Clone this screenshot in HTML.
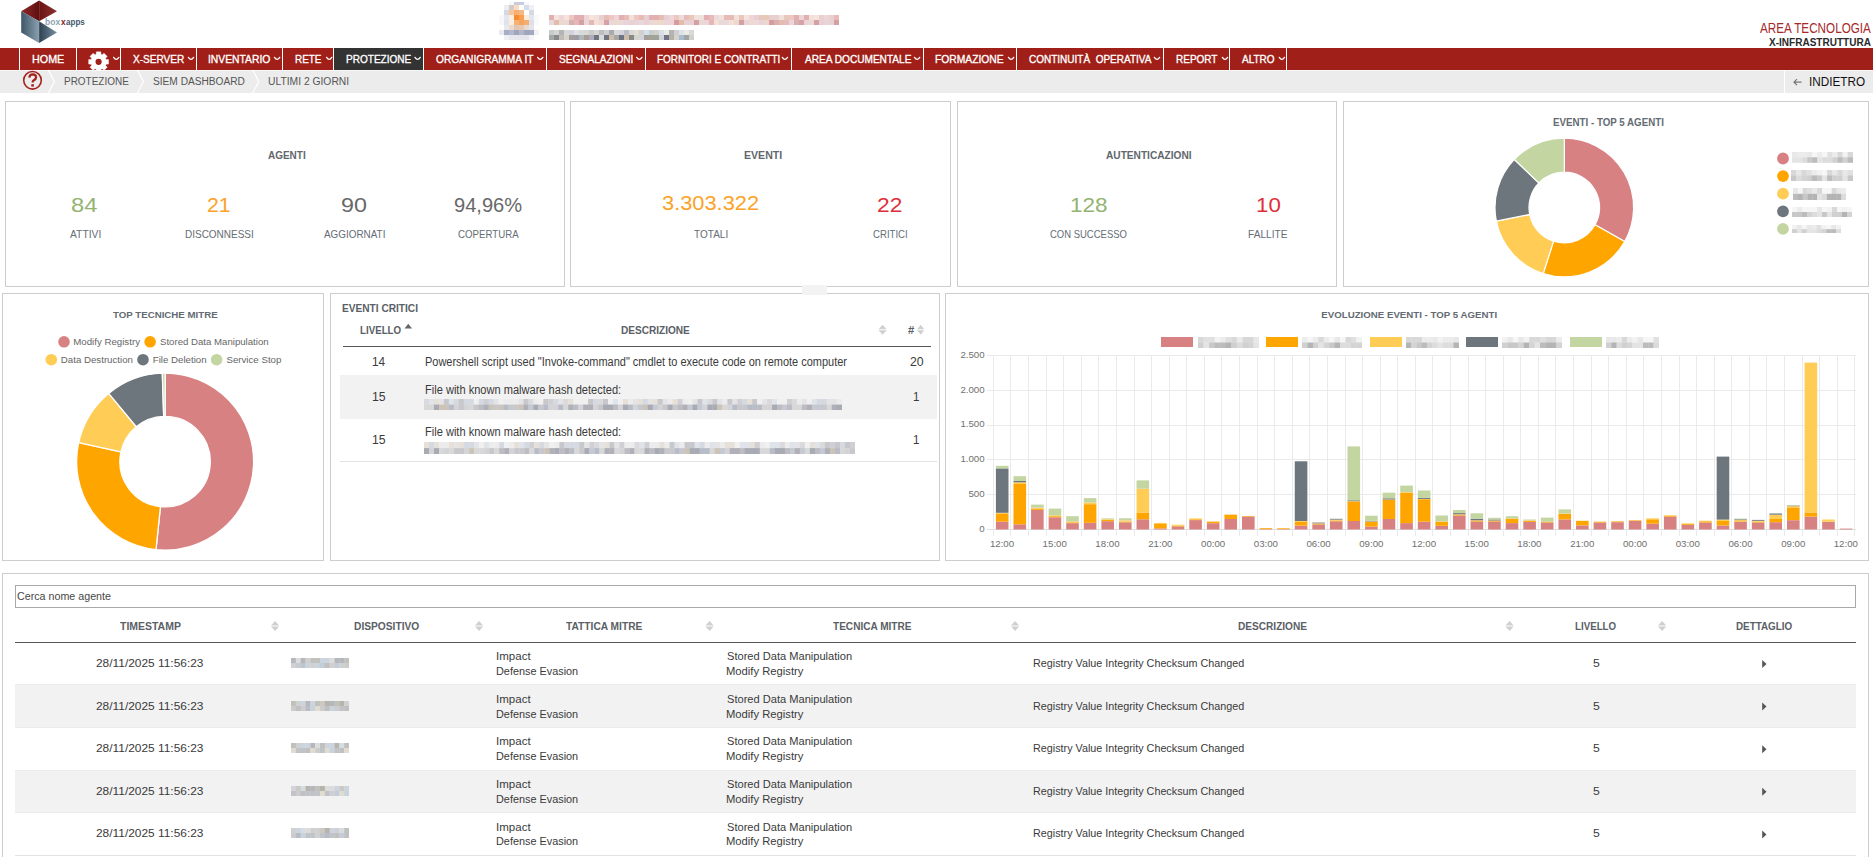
<!DOCTYPE html>
<html><head><meta charset="utf-8"><style>
html,body{margin:0;padding:0;background:#fff;width:1873px;height:857px;overflow:hidden;position:relative}
body{font-family:"Liberation Sans",sans-serif}
.t{position:absolute;white-space:nowrap;line-height:1;transform-origin:0 0}
.r{position:absolute;display:block}
svg.r{overflow:visible}
</style></head><body>
<svg class="r" style="left:0;top:0" width="100" height="48">
<defs>
<linearGradient id="lg1" x1="0" y1="0" x2="1" y2="0"><stop offset="0" stop-color="#8f2a2a"/><stop offset="1" stop-color="#5e0e10"/></linearGradient>
<linearGradient id="lg2" x1="0" y1="0" x2="1" y2="0"><stop offset="0" stop-color="#6a1212"/><stop offset="1" stop-color="#8e3232"/></linearGradient>
<linearGradient id="lg3" x1="0" y1="0" x2="1" y2="0"><stop offset="0" stop-color="#3e5668"/><stop offset="1" stop-color="#8aa0af"/></linearGradient>
<linearGradient id="lg4" x1="0" y1="0" x2="1" y2="0"><stop offset="0" stop-color="#2c4152"/><stop offset="1" stop-color="#7890a2"/></linearGradient>
</defs>
<polygon points="39.1,0.5 21.2,11.2 39.1,21.3" fill="url(#lg1)"/>
<polygon points="39.1,0.5 57,11.2 39.1,21.3" fill="url(#lg2)"/>
<polygon points="21.2,11.2 39.1,21.3 39.1,43 21.2,32.5" fill="url(#lg3)"/>
<polygon points="39.1,21.3 57,32.5 39.1,43" fill="url(#lg4)"/>
</svg>
<div class="t" style="left:45.45px;top:18.00px;font-size:9.00px;color:#8ea3b2;font-weight:bold;transform:scaleX(0.9449);">box</div>
<div class="t" style="left:60.92px;top:18.00px;font-size:9.00px;color:#8b1a1a;font-weight:bold;transform:scaleX(0.9259);">x</div>
<div class="t" style="left:65.76px;top:18.00px;font-size:9.00px;color:#3f586c;font-weight:bold;transform:scaleX(0.8928);">apps</div>
<svg class="r" style="left:0;top:0" width="600" height="48" shape-rendering="crispEdges"><rect x="513.9" y="2.1" width="5.05" height="2.95" fill="#c8ccdc"/><rect x="518.9" y="2.1" width="5.05" height="2.95" fill="#c8ccdc"/><rect x="508.9" y="2.1" width="5.05" height="2.95" fill="#f6f8fa"/><rect x="523.9" y="2.1" width="5.05" height="2.95" fill="#f6f8fa"/><rect x="503.9" y="5.0" width="5.05" height="5.05" fill="#eceef3"/><rect x="508.9" y="5.0" width="5.05" height="5.05" fill="#d6cac6"/><rect x="513.9" y="5.0" width="5.05" height="5.05" fill="#f8dcc4"/><rect x="518.9" y="5.0" width="5.05" height="5.05" fill="#fafcfd"/><rect x="523.9" y="5.0" width="5.05" height="5.05" fill="#d8dce6"/><rect x="528.9" y="5.0" width="5.05" height="5.05" fill="#eef0f4"/><rect x="503.9" y="10.0" width="5.05" height="5.05" fill="#d5d9e5"/><rect x="508.9" y="10.0" width="5.05" height="5.05" fill="#f8c49a"/><rect x="513.9" y="10.0" width="5.05" height="5.05" fill="#f7ae72"/><rect x="518.9" y="10.0" width="5.05" height="5.05" fill="#f5b880"/><rect x="523.9" y="10.0" width="5.05" height="5.05" fill="#ffffff"/><rect x="528.9" y="10.0" width="5.05" height="5.05" fill="#d5dbe6"/><rect x="498.9" y="15.0" width="5.05" height="5.05" fill="#f6f7f9"/><rect x="503.9" y="15.0" width="5.05" height="5.05" fill="#e3e6ee"/><rect x="508.9" y="15.0" width="5.05" height="5.05" fill="#fdeedf"/><rect x="513.9" y="15.0" width="5.05" height="5.05" fill="#fa8a2e"/><rect x="518.9" y="15.0" width="5.05" height="5.05" fill="#f89e50"/><rect x="523.9" y="15.0" width="5.05" height="5.05" fill="#fcecd8"/><rect x="528.9" y="15.0" width="5.05" height="5.05" fill="#e2e7ef"/><rect x="533.9" y="15.0" width="5.05" height="5.05" fill="#f8f9fb"/><rect x="498.9" y="20.0" width="5.05" height="5.05" fill="#f8f8fa"/><rect x="503.9" y="20.0" width="5.05" height="5.05" fill="#dfe3ec"/><rect x="508.9" y="20.0" width="5.05" height="5.05" fill="#fbeede"/><rect x="513.9" y="20.0" width="5.05" height="5.05" fill="#f6b07a"/><rect x="518.9" y="20.0" width="5.05" height="5.05" fill="#f5a562"/><rect x="523.9" y="20.0" width="5.05" height="5.05" fill="#f5ad70"/><rect x="528.9" y="20.0" width="5.05" height="5.05" fill="#dfdfe6"/><rect x="533.9" y="20.0" width="5.05" height="5.05" fill="#fafafa"/><rect x="503.9" y="25.0" width="5.05" height="5.05" fill="#e6e8ee"/><rect x="508.9" y="25.0" width="5.05" height="5.05" fill="#eedacb"/><rect x="513.9" y="25.0" width="5.05" height="5.05" fill="#e2c6b4"/><rect x="518.9" y="25.0" width="5.05" height="5.05" fill="#e8c8ae"/><rect x="523.9" y="25.0" width="5.05" height="5.05" fill="#e8dcd2"/><rect x="528.9" y="25.0" width="5.05" height="5.05" fill="#e3e5ec"/><rect x="498.9" y="30.0" width="5.05" height="5.05" fill="#e8e9ef"/><rect x="503.9" y="30.0" width="5.05" height="5.05" fill="#a8acc4"/><rect x="508.9" y="30.0" width="5.05" height="5.05" fill="#b4b8cc"/><rect x="513.9" y="30.0" width="5.05" height="5.05" fill="#a0a6bc"/><rect x="518.9" y="30.0" width="5.05" height="5.05" fill="#b2b8cc"/><rect x="523.9" y="30.0" width="5.05" height="5.05" fill="#a0a4bc"/><rect x="528.9" y="30.0" width="5.05" height="5.05" fill="#a4a8c0"/><rect x="533.9" y="30.0" width="5.05" height="5.05" fill="#f2f2f6"/><rect x="503.9" y="35.0" width="5.05" height="5.05" fill="#eef0f4"/><rect x="508.9" y="35.0" width="5.05" height="5.05" fill="#e6e8ee"/><rect x="513.9" y="35.0" width="5.05" height="5.05" fill="#e6e8ee"/><rect x="518.9" y="35.0" width="5.05" height="5.05" fill="#e4e6ec"/><rect x="523.9" y="35.0" width="5.05" height="5.05" fill="#e4e6ec"/><rect x="528.9" y="35.0" width="5.05" height="5.05" fill="#f4f4f8"/></svg>
<svg class="r" style="left:549px;top:15px;overflow:hidden" width="290" height="10" viewBox="0 0 290 10" preserveAspectRatio="none"><rect x="0.00" y="0.00" width="5.30" height="5.30" fill="#e2b0b0"/><rect x="5.00" y="0.00" width="5.30" height="5.30" fill="#f6e4dc"/><rect x="10.00" y="0.00" width="5.30" height="5.30" fill="#efd4d8"/><rect x="15.00" y="0.00" width="5.30" height="5.30" fill="#f6e4dc"/><rect x="20.00" y="0.00" width="5.30" height="5.30" fill="#eec8c0"/><rect x="25.00" y="0.00" width="5.30" height="5.30" fill="#e2b0b0"/><rect x="30.00" y="0.00" width="5.30" height="5.30" fill="#e2b0b0"/><rect x="35.00" y="0.00" width="5.30" height="5.30" fill="#efd4d8"/><rect x="40.00" y="0.00" width="5.30" height="5.30" fill="#f6e4dc"/><rect x="45.00" y="0.00" width="5.30" height="5.30" fill="#f2e0da"/><rect x="50.00" y="0.00" width="5.30" height="5.30" fill="#e8d0d0"/><rect x="55.00" y="0.00" width="5.30" height="5.30" fill="#e6bcb4"/><rect x="60.00" y="0.00" width="5.30" height="5.30" fill="#eec8c0"/><rect x="65.00" y="0.00" width="5.30" height="5.30" fill="#efd4d8"/><rect x="70.00" y="0.00" width="5.30" height="5.30" fill="#e2b0b0"/><rect x="75.00" y="0.00" width="5.30" height="5.30" fill="#e8bab8"/><rect x="80.00" y="0.00" width="5.30" height="5.30" fill="#f2e0da"/><rect x="85.00" y="0.00" width="5.30" height="5.30" fill="#eec8c0"/><rect x="90.00" y="0.00" width="5.30" height="5.30" fill="#e6bcb4"/><rect x="95.00" y="0.00" width="5.30" height="5.30" fill="#e5d0d6"/><rect x="100.00" y="0.00" width="5.30" height="5.30" fill="#e2b0b0"/><rect x="105.00" y="0.00" width="5.30" height="5.30" fill="#e3b0b0"/><rect x="110.00" y="0.00" width="5.30" height="5.30" fill="#e6bcb4"/><rect x="115.00" y="0.00" width="5.30" height="5.30" fill="#e5d0d6"/><rect x="120.00" y="0.00" width="5.30" height="5.30" fill="#efd4d8"/><rect x="125.00" y="0.00" width="5.30" height="5.30" fill="#eec8c0"/><rect x="130.00" y="0.00" width="5.30" height="5.30" fill="#ecdcdc"/><rect x="135.00" y="0.00" width="5.30" height="5.30" fill="#e8bab8"/><rect x="140.00" y="0.00" width="5.30" height="5.30" fill="#e8c8b8"/><rect x="145.00" y="0.00" width="5.30" height="5.30" fill="#f2e0da"/><rect x="150.00" y="0.00" width="5.30" height="5.30" fill="#f0e0dc"/><rect x="155.00" y="0.00" width="5.30" height="5.30" fill="#e2b0b0"/><rect x="160.00" y="0.00" width="5.30" height="5.30" fill="#e8bab8"/><rect x="165.00" y="0.00" width="5.30" height="5.30" fill="#ecdcdc"/><rect x="170.00" y="0.00" width="5.30" height="5.30" fill="#f2e0da"/><rect x="175.00" y="0.00" width="5.30" height="5.30" fill="#e8bab8"/><rect x="180.00" y="0.00" width="5.30" height="5.30" fill="#e6bcb4"/><rect x="185.00" y="0.00" width="5.30" height="5.30" fill="#f2e0da"/><rect x="190.00" y="0.00" width="5.30" height="5.30" fill="#e8c8b8"/><rect x="195.00" y="0.00" width="5.30" height="5.30" fill="#f6e4dc"/><rect x="200.00" y="0.00" width="5.30" height="5.30" fill="#efd4d8"/><rect x="205.00" y="0.00" width="5.30" height="5.30" fill="#e5d0d6"/><rect x="210.00" y="0.00" width="5.30" height="5.30" fill="#e8c8b8"/><rect x="215.00" y="0.00" width="5.30" height="5.30" fill="#e8c8b8"/><rect x="220.00" y="0.00" width="5.30" height="5.30" fill="#e8d0d0"/><rect x="225.00" y="0.00" width="5.30" height="5.30" fill="#e8d0d0"/><rect x="230.00" y="0.00" width="5.30" height="5.30" fill="#f2e0da"/><rect x="235.00" y="0.00" width="5.30" height="5.30" fill="#e8c8b8"/><rect x="240.00" y="0.00" width="5.30" height="5.30" fill="#eec8c0"/><rect x="245.00" y="0.00" width="5.30" height="5.30" fill="#e2b0b0"/><rect x="250.00" y="0.00" width="5.30" height="5.30" fill="#ecd4d8"/><rect x="255.00" y="0.00" width="5.30" height="5.30" fill="#e2b0b0"/><rect x="260.00" y="0.00" width="5.30" height="5.30" fill="#f2e0da"/><rect x="265.00" y="0.00" width="5.30" height="5.30" fill="#f6e4dc"/><rect x="270.00" y="0.00" width="5.30" height="5.30" fill="#e8d0d0"/><rect x="275.00" y="0.00" width="5.30" height="5.30" fill="#efd4d8"/><rect x="280.00" y="0.00" width="5.30" height="5.30" fill="#e8d0d0"/><rect x="285.00" y="0.00" width="5.30" height="5.30" fill="#e8bab8"/><rect x="0.00" y="5.00" width="5.30" height="5.30" fill="#e8d8dc"/><rect x="5.00" y="5.00" width="5.30" height="5.30" fill="#e4bcac"/><rect x="10.00" y="5.00" width="5.30" height="5.30" fill="#ecd8cc"/><rect x="15.00" y="5.00" width="5.30" height="5.30" fill="#ead8d8"/><rect x="20.00" y="5.00" width="5.30" height="5.30" fill="#d8b0b0"/><rect x="25.00" y="5.00" width="5.30" height="5.30" fill="#e4b8b8"/><rect x="30.00" y="5.00" width="5.30" height="5.30" fill="#d4a0a4"/><rect x="35.00" y="5.00" width="5.30" height="5.30" fill="#ead8d8"/><rect x="40.00" y="5.00" width="5.30" height="5.30" fill="#e4b8b8"/><rect x="45.00" y="5.00" width="5.30" height="5.30" fill="#f4e0d4"/><rect x="50.00" y="5.00" width="5.30" height="5.30" fill="#f0d8d8"/><rect x="55.00" y="5.00" width="5.30" height="5.30" fill="#d8a0a8"/><rect x="60.00" y="5.00" width="5.30" height="5.30" fill="#e8d8dc"/><rect x="65.00" y="5.00" width="5.30" height="5.30" fill="#ecd8cc"/><rect x="70.00" y="5.00" width="5.30" height="5.30" fill="#ead8d8"/><rect x="75.00" y="5.00" width="5.30" height="5.30" fill="#e8d4d8"/><rect x="80.00" y="5.00" width="5.30" height="5.30" fill="#e8d0d4"/><rect x="85.00" y="5.00" width="5.30" height="5.30" fill="#e8d4d8"/><rect x="90.00" y="5.00" width="5.30" height="5.30" fill="#e8d8dc"/><rect x="95.00" y="5.00" width="5.30" height="5.30" fill="#e8d0d4"/><rect x="100.00" y="5.00" width="5.30" height="5.30" fill="#ead8d8"/><rect x="105.00" y="5.00" width="5.30" height="5.30" fill="#ecd8cc"/><rect x="110.00" y="5.00" width="5.30" height="5.30" fill="#ecd8cc"/><rect x="115.00" y="5.00" width="5.30" height="5.30" fill="#ecd4d8"/><rect x="120.00" y="5.00" width="5.30" height="5.30" fill="#ecd4d8"/><rect x="125.00" y="5.00" width="5.30" height="5.30" fill="#d89ca0"/><rect x="130.00" y="5.00" width="5.30" height="5.30" fill="#e4bcac"/><rect x="135.00" y="5.00" width="5.30" height="5.30" fill="#e8d0d4"/><rect x="140.00" y="5.00" width="5.30" height="5.30" fill="#e8d0d4"/><rect x="145.00" y="5.00" width="5.30" height="5.30" fill="#d4a0a4"/><rect x="150.00" y="5.00" width="5.30" height="5.30" fill="#ead8d8"/><rect x="155.00" y="5.00" width="5.30" height="5.30" fill="#ecd4d8"/><rect x="160.00" y="5.00" width="5.30" height="5.30" fill="#e4b8b8"/><rect x="165.00" y="5.00" width="5.30" height="5.30" fill="#f4e0d4"/><rect x="170.00" y="5.00" width="5.30" height="5.30" fill="#ead8d8"/><rect x="175.00" y="5.00" width="5.30" height="5.30" fill="#e8d8dc"/><rect x="180.00" y="5.00" width="5.30" height="5.30" fill="#f4e0d4"/><rect x="185.00" y="5.00" width="5.30" height="5.30" fill="#ecd8cc"/><rect x="190.00" y="5.00" width="5.30" height="5.30" fill="#d4a0a4"/><rect x="195.00" y="5.00" width="5.30" height="5.30" fill="#e8d4d8"/><rect x="200.00" y="5.00" width="5.30" height="5.30" fill="#ecd8d4"/><rect x="205.00" y="5.00" width="5.30" height="5.30" fill="#f0d8d8"/><rect x="210.00" y="5.00" width="5.30" height="5.30" fill="#e8d4d8"/><rect x="215.00" y="5.00" width="5.30" height="5.30" fill="#ecd8cc"/><rect x="220.00" y="5.00" width="5.30" height="5.30" fill="#d89ca0"/><rect x="225.00" y="5.00" width="5.30" height="5.30" fill="#d8b0b0"/><rect x="230.00" y="5.00" width="5.30" height="5.30" fill="#e4bcac"/><rect x="235.00" y="5.00" width="5.30" height="5.30" fill="#e4bcbc"/><rect x="240.00" y="5.00" width="5.30" height="5.30" fill="#ecd4d8"/><rect x="245.00" y="5.00" width="5.30" height="5.30" fill="#d8b0b0"/><rect x="250.00" y="5.00" width="5.30" height="5.30" fill="#d8a0a8"/><rect x="255.00" y="5.00" width="5.30" height="5.30" fill="#ecd4d8"/><rect x="260.00" y="5.00" width="5.30" height="5.30" fill="#ecd8d4"/><rect x="265.00" y="5.00" width="5.30" height="5.30" fill="#d4a0a4"/><rect x="270.00" y="5.00" width="5.30" height="5.30" fill="#e8d0d4"/><rect x="275.00" y="5.00" width="5.30" height="5.30" fill="#e8d4d8"/><rect x="280.00" y="5.00" width="5.30" height="5.30" fill="#e8d0d4"/><rect x="285.00" y="5.00" width="5.30" height="5.30" fill="#d4a0a4"/></svg>
<svg class="r" style="left:549px;top:30px;overflow:hidden" width="145" height="10" viewBox="0 0 145 10" preserveAspectRatio="none"><rect x="0.00" y="0.00" width="5.30" height="5.30" fill="#c8ccc8"/><rect x="5.00" y="0.00" width="5.30" height="5.30" fill="#d5d5d3"/><rect x="10.00" y="0.00" width="5.30" height="5.30" fill="#b4b4b4"/><rect x="15.00" y="0.00" width="5.30" height="5.30" fill="#d8d8d8"/><rect x="20.00" y="0.00" width="5.30" height="5.30" fill="#d4d2dc"/><rect x="25.00" y="0.00" width="5.30" height="5.30" fill="#dfe1e6"/><rect x="30.00" y="0.00" width="5.30" height="5.30" fill="#d9d9d7"/><rect x="35.00" y="0.00" width="5.30" height="5.30" fill="#d8d8d8"/><rect x="40.00" y="0.00" width="5.30" height="5.30" fill="#c8ccc8"/><rect x="45.00" y="0.00" width="5.30" height="5.30" fill="#d5d5d3"/><rect x="50.00" y="0.00" width="5.30" height="5.30" fill="#bcbcc4"/><rect x="55.00" y="0.00" width="5.30" height="5.30" fill="#cfcfcf"/><rect x="60.00" y="0.00" width="5.30" height="5.30" fill="#a8aab0"/><rect x="65.00" y="0.00" width="5.30" height="5.30" fill="#d9d9d7"/><rect x="70.00" y="0.00" width="5.30" height="5.30" fill="#d4d2dc"/><rect x="75.00" y="0.00" width="5.30" height="5.30" fill="#bcbcc4"/><rect x="80.00" y="0.00" width="5.30" height="5.30" fill="#d8d8d8"/><rect x="85.00" y="0.00" width="5.30" height="5.30" fill="#e4dcd0"/><rect x="90.00" y="0.00" width="5.30" height="5.30" fill="#d0d0d0"/><rect x="95.00" y="0.00" width="5.30" height="5.30" fill="#d4e0ea"/><rect x="100.00" y="0.00" width="5.30" height="5.30" fill="#c8ccd0"/><rect x="105.00" y="0.00" width="5.30" height="5.30" fill="#d4d0c8"/><rect x="110.00" y="0.00" width="5.30" height="5.30" fill="#d4e0ea"/><rect x="115.00" y="0.00" width="5.30" height="5.30" fill="#ebebe6"/><rect x="120.00" y="0.00" width="5.30" height="5.30" fill="#b4b4b4"/><rect x="125.00" y="0.00" width="5.30" height="5.30" fill="#d0d0d0"/><rect x="130.00" y="0.00" width="5.30" height="5.30" fill="#dfe1e6"/><rect x="135.00" y="0.00" width="5.30" height="5.30" fill="#ebebe6"/><rect x="140.00" y="0.00" width="5.30" height="5.30" fill="#d9d9d7"/><rect x="0.00" y="5.00" width="5.30" height="5.30" fill="#a4a8a8"/><rect x="5.00" y="5.00" width="5.30" height="5.30" fill="#888888"/><rect x="10.00" y="5.00" width="5.30" height="5.30" fill="#c0bcb8"/><rect x="15.00" y="5.00" width="5.30" height="5.30" fill="#d4d4cc"/><rect x="20.00" y="5.00" width="5.30" height="5.30" fill="#a89c98"/><rect x="25.00" y="5.00" width="5.30" height="5.30" fill="#9c9ca4"/><rect x="30.00" y="5.00" width="5.30" height="5.30" fill="#b0b8bc"/><rect x="35.00" y="5.00" width="5.30" height="5.30" fill="#a89c98"/><rect x="40.00" y="5.00" width="5.30" height="5.30" fill="#b0acbc"/><rect x="45.00" y="5.00" width="5.30" height="5.30" fill="#707480"/><rect x="50.00" y="5.00" width="5.30" height="5.30" fill="#d8dcd8"/><rect x="55.00" y="5.00" width="5.30" height="5.30" fill="#707480"/><rect x="60.00" y="5.00" width="5.30" height="5.30" fill="#ccbca8"/><rect x="65.00" y="5.00" width="5.30" height="5.30" fill="#a4a8a8"/><rect x="70.00" y="5.00" width="5.30" height="5.30" fill="#707480"/><rect x="75.00" y="5.00" width="5.30" height="5.30" fill="#ccbca8"/><rect x="80.00" y="5.00" width="5.30" height="5.30" fill="#888888"/><rect x="85.00" y="5.00" width="5.30" height="5.30" fill="#d4d4cc"/><rect x="90.00" y="5.00" width="5.30" height="5.30" fill="#d0d4dc"/><rect x="95.00" y="5.00" width="5.30" height="5.30" fill="#a89c98"/><rect x="100.00" y="5.00" width="5.30" height="5.30" fill="#a0a498"/><rect x="105.00" y="5.00" width="5.30" height="5.30" fill="#a0a498"/><rect x="110.00" y="5.00" width="5.30" height="5.30" fill="#d0d4dc"/><rect x="115.00" y="5.00" width="5.30" height="5.30" fill="#707480"/><rect x="120.00" y="5.00" width="5.30" height="5.30" fill="#b4b0aa"/><rect x="125.00" y="5.00" width="5.30" height="5.30" fill="#d4d4cc"/><rect x="130.00" y="5.00" width="5.30" height="5.30" fill="#aabccc"/><rect x="135.00" y="5.00" width="5.30" height="5.30" fill="#a0a4a4"/><rect x="140.00" y="5.00" width="5.30" height="5.30" fill="#d0d0cc"/></svg>
<div class="t" style="left:1760.20px;top:21.00px;font-size:14.30px;color:#a8282a;font-weight:normal;transform:scaleX(0.8176);">AREA TECNOLOGIA</div>
<div class="t" style="left:1769.30px;top:37.00px;font-size:11.40px;color:#2a2a2a;font-weight:bold;transform:scaleX(0.8798);">X-INFRASTRUTTURA</div>
<div class="r" style="left:0px;top:48px;width:1873px;height:22px;background:#a01f18;"></div>
<div class="r" style="left:334px;top:48px;width:89px;height:22px;background:#333333;"></div>
<div class="r" style="left:19px;top:48px;width:1px;height:22px;background:#ffffff;"></div>
<div class="r" style="left:76px;top:48px;width:1px;height:22px;background:#ffffff;"></div>
<div class="r" style="left:120px;top:48px;width:1px;height:22px;background:#ffffff;"></div>
<div class="r" style="left:196px;top:48px;width:1px;height:22px;background:#ffffff;"></div>
<div class="r" style="left:282px;top:48px;width:1px;height:22px;background:#ffffff;"></div>
<div class="r" style="left:333px;top:48px;width:1px;height:22px;background:#ffffff;"></div>
<div class="r" style="left:423px;top:48px;width:1px;height:22px;background:#ffffff;"></div>
<div class="r" style="left:546px;top:48px;width:1px;height:22px;background:#ffffff;"></div>
<div class="r" style="left:645px;top:48px;width:1px;height:22px;background:#ffffff;"></div>
<div class="r" style="left:791px;top:48px;width:1px;height:22px;background:#ffffff;"></div>
<div class="r" style="left:923px;top:48px;width:1px;height:22px;background:#ffffff;"></div>
<div class="r" style="left:1016px;top:48px;width:1px;height:22px;background:#ffffff;"></div>
<div class="r" style="left:1163px;top:48px;width:1px;height:22px;background:#ffffff;"></div>
<div class="r" style="left:1229px;top:48px;width:1px;height:22px;background:#ffffff;"></div>
<div class="r" style="left:1286px;top:48px;width:1px;height:22px;background:#ffffff;"></div>
<div class="t" style="left:32.14px;top:54.00px;font-size:11.20px;color:#ffffff;font-weight:normal;transform:scaleX(0.9611);-webkit-text-stroke:0.35px #fff;">HOME</div>
<div class="t" style="left:133.25px;top:54.00px;font-size:11.20px;color:#ffffff;font-weight:normal;transform:scaleX(0.9000);-webkit-text-stroke:0.35px #fff;">X-SERVER</div>
<div class="t" style="left:208.37px;top:54.00px;font-size:11.20px;color:#ffffff;font-weight:normal;transform:scaleX(0.9231);-webkit-text-stroke:0.35px #fff;">INVENTARIO</div>
<div class="t" style="left:295.11px;top:54.00px;font-size:11.20px;color:#ffffff;font-weight:normal;transform:scaleX(0.8841);-webkit-text-stroke:0.35px #fff;">RETE</div>
<div class="t" style="left:345.90px;top:54.00px;font-size:11.20px;color:#ffffff;font-weight:normal;transform:scaleX(0.8971);-webkit-text-stroke:0.35px #fff;">PROTEZIONE</div>
<div class="t" style="left:435.54px;top:54.00px;font-size:11.20px;color:#ffffff;font-weight:normal;transform:scaleX(0.9117);-webkit-text-stroke:0.35px #fff;">ORGANIGRAMMA IT</div>
<div class="t" style="left:558.55px;top:54.00px;font-size:11.20px;color:#ffffff;font-weight:normal;transform:scaleX(0.8984);-webkit-text-stroke:0.35px #fff;">SEGNALAZIONI</div>
<div class="t" style="left:656.70px;top:54.00px;font-size:11.20px;color:#ffffff;font-weight:normal;transform:scaleX(0.8929);-webkit-text-stroke:0.35px #fff;">FORNITORI E CONTRATTI</div>
<div class="t" style="left:805.00px;top:54.00px;font-size:11.20px;color:#ffffff;font-weight:normal;transform:scaleX(0.9026);-webkit-text-stroke:0.35px #fff;">AREA DOCUMENTALE</div>
<div class="t" style="left:935.47px;top:54.00px;font-size:11.20px;color:#ffffff;font-weight:normal;transform:scaleX(0.9208);-webkit-text-stroke:0.35px #fff;">FORMAZIONE</div>
<div class="t" style="left:1028.50px;top:54.00px;font-size:11.20px;color:#ffffff;font-weight:normal;transform:scaleX(0.8936);-webkit-text-stroke:0.35px #fff;">CONTINUITÀ&nbsp; OPERATIVA</div>
<div class="t" style="left:1175.60px;top:54.00px;font-size:11.20px;color:#ffffff;font-weight:normal;transform:scaleX(0.8929);-webkit-text-stroke:0.35px #fff;">REPORT</div>
<div class="t" style="left:1241.80px;top:54.00px;font-size:11.20px;color:#ffffff;font-weight:normal;transform:scaleX(0.8901);-webkit-text-stroke:0.35px #fff;">ALTRO</div>
<svg class="r" style="left:0;top:0" width="1873" height="100"><path d="M188.4 57.4 Q191.0 61.2 193.6 57.4 M274.5 57.4 Q277.1 61.2 279.7 57.4 M326.6 57.4 Q329.2 61.2 331.8 57.4 M415.0 57.4 Q417.6 61.2 420.2 57.4 M537.6 57.4 Q540.2 61.2 542.8 57.4 M636.7 57.4 Q639.3 61.2 641.9 57.4 M782.3 57.4 Q784.9 61.2 787.5 57.4 M914.5 57.4 Q917.1 61.2 919.7 57.4 M1008.5 57.4 Q1011.1 61.2 1013.7 57.4 M1154.4 57.4 Q1157.0 61.2 1159.6 57.4 M1222.4 57.4 Q1225.0 61.2 1227.6 57.4 M1279.3 57.4 Q1281.9 61.2 1284.5 57.4 M113.6 57.4 Q116.2 61.2 118.8 57.4 " fill="none" stroke="#fff" stroke-width="1.3" stroke-linecap="round"/></svg>
<svg class="r" style="left:0;top:48px;overflow:hidden" width="200" height="22"><g transform="translate(0,-48)"><polygon points="96.22,54.37 96.32,51.86 100.88,51.86 100.98,54.37 102.17,54.86 104.02,53.16 107.24,56.38 105.54,58.23 106.03,59.42 108.54,59.52 108.54,64.08 106.03,64.18 105.54,65.37 107.24,67.22 104.02,70.44 102.17,68.74 100.98,69.23 100.88,71.74 96.32,71.74 96.22,69.23 95.03,68.74 93.18,70.44 89.96,67.22 91.66,65.37 91.17,64.18 88.66,64.08 88.66,59.52 91.17,59.42 91.66,58.23 89.96,56.38 93.18,53.16 95.03,54.86" fill="#fff" stroke="#fff" stroke-width="0.4" stroke-linejoin="round"/><circle cx="98.6" cy="61.8" r="3.1" fill="#a01f18"/></g></svg>
<div class="r" style="left:0px;top:70px;width:1873px;height:23px;background:#ececec;"></div>
<div class="r" style="left:0px;top:70px;width:1873px;height:1px;background:#f6f8f8;"></div>
<svg class="r" style="left:0;top:0" width="1873" height="100">
<circle cx="32.5" cy="80.3" r="8.8" fill="none" stroke="#a3241c" stroke-width="1.6"/>
<path d="M29.3 77.6 Q29.6 74.3 32.8 74.3 Q36.2 74.5 36.1 77.4 Q36 79.2 33.8 80.3 Q32.6 81 32.6 82.6" fill="none" stroke="#a3241c" stroke-width="2.2"/>
<rect x="31.3" y="84.2" width="2.6" height="2.4" fill="#a3241c"/>
<path d="M48.3 70 L54.4 81.5 L48.3 93 M137.4 70 L143.4 81.5 L137.4 93 M252.7 70 L258.7 81.5 L252.7 93" fill="none" stroke="#ffffff" stroke-width="1.2"/>
<path d="M1794 82.2 H1801.5 M1797 79.2 L1794 82.2 L1797 85.2" fill="none" stroke="#777" stroke-width="1.2"/>
</svg>
<div class="r" style="left:1784px;top:70px;width:1px;height:23px;background:#ffffff;"></div>
<div class="t" style="left:64.00px;top:75.00px;font-size:11.70px;color:#555555;font-weight:normal;transform:scaleX(0.8534);">PROTEZIONE</div>
<div class="t" style="left:152.64px;top:75.00px;font-size:11.70px;color:#555555;font-weight:normal;transform:scaleX(0.8685);">SIEM DASHBOARD</div>
<div class="t" style="left:268.13px;top:75.00px;font-size:11.70px;color:#555555;font-weight:normal;transform:scaleX(0.8819);">ULTIMI 2 GIORNI</div>
<div class="t" style="left:1809.34px;top:76.00px;font-size:12.80px;color:#111111;font-weight:normal;transform:scaleX(0.9176);">INDIETRO</div>
<div class="r" style="left:5px;top:101px;width:560px;height:186px;background:#fff;border:1px solid #cdcdcd;box-sizing:border-box"></div>
<div class="r" style="left:570px;top:101px;width:381px;height:186px;background:#fff;border:1px solid #cdcdcd;box-sizing:border-box"></div>
<div class="r" style="left:957px;top:101px;width:380px;height:186px;background:#fff;border:1px solid #cdcdcd;box-sizing:border-box"></div>
<div class="r" style="left:1343px;top:101px;width:526px;height:186px;background:#fff;border:1px solid #cdcdcd;box-sizing:border-box"></div>
<div class="t" style="left:268.15px;top:150.00px;font-size:10.90px;color:#61676d;font-weight:bold;transform:scaleX(0.9162);">AGENTI</div>
<div class="t" style="left:71.23px;top:194.00px;font-size:21.00px;color:#94b372;font-weight:normal;transform:scaleX(1.1318);">84</div>
<div class="t" style="left:206.84px;top:194.00px;font-size:21.00px;color:#fca226;font-weight:normal;transform:scaleX(1.0134);">21</div>
<div class="t" style="left:340.85px;top:194.00px;font-size:21.00px;color:#686868;font-weight:normal;transform:scaleX(1.1096);">90</div>
<div class="t" style="left:454.00px;top:194.00px;font-size:21.00px;color:#686868;font-weight:normal;transform:scaleX(0.9567);">94,96%</div>
<div class="t" style="left:70.20px;top:229.00px;font-size:11.30px;color:#656d75;font-weight:normal;transform:scaleX(0.9105);">ATTIVI</div>
<div class="t" style="left:185.40px;top:229.00px;font-size:11.30px;color:#656d75;font-weight:normal;transform:scaleX(0.8836);">DISCONNESSI</div>
<div class="t" style="left:323.80px;top:229.00px;font-size:11.30px;color:#656d75;font-weight:normal;transform:scaleX(0.8763);">AGGIORNATI</div>
<div class="t" style="left:458.12px;top:229.00px;font-size:11.30px;color:#656d75;font-weight:normal;transform:scaleX(0.8579);">COPERTURA</div>
<div class="t" style="left:743.71px;top:150.00px;font-size:10.90px;color:#61676d;font-weight:bold;transform:scaleX(0.9702);">EVENTI</div>
<div class="t" style="left:662.13px;top:192.00px;font-size:21.00px;color:#fca226;font-weight:normal;transform:scaleX(1.0387);">3.303.322</div>
<div class="t" style="left:877.36px;top:194.00px;font-size:21.00px;color:#de2f3a;font-weight:normal;transform:scaleX(1.0844);">22</div>
<div class="t" style="left:693.80px;top:229.00px;font-size:11.30px;color:#656d75;font-weight:normal;transform:scaleX(0.8890);">TOTALI</div>
<div class="t" style="left:872.72px;top:229.00px;font-size:11.30px;color:#656d75;font-weight:normal;transform:scaleX(0.8518);">CRITICI</div>
<div class="t" style="left:1106.35px;top:150.00px;font-size:10.90px;color:#61676d;font-weight:bold;transform:scaleX(0.9306);">AUTENTICAZIONI</div>
<div class="t" style="left:1070.21px;top:194.00px;font-size:21.00px;color:#94b372;font-weight:normal;transform:scaleX(1.0753);">128</div>
<div class="t" style="left:1255.53px;top:194.00px;font-size:21.00px;color:#de2f3a;font-weight:normal;transform:scaleX(1.0619);">10</div>
<div class="t" style="left:1050.33px;top:229.00px;font-size:11.30px;color:#656d75;font-weight:normal;transform:scaleX(0.8391);">CON SUCCESSO</div>
<div class="t" style="left:1248.09px;top:229.00px;font-size:11.30px;color:#656d75;font-weight:normal;transform:scaleX(0.8967);">FALLITE</div>
<svg class="r" style="left:0;top:0" width="1873" height="857"><path d="M1564.30 138.20 A69.30 69.30 0 0 1 1624.68 241.52 L1595.05 224.83 A35.30 35.30 0 0 0 1564.30 172.20 Z" fill="#d88183" stroke="#fff" stroke-width="1.2" stroke-linejoin="miter"/><path d="M1624.68 241.52 A69.30 69.30 0 0 1 1543.23 273.52 L1553.57 241.13 A35.30 35.30 0 0 0 1595.05 224.83 Z" fill="#ffa500" stroke="#fff" stroke-width="1.2" stroke-linejoin="miter"/><path d="M1543.23 273.52 A69.30 69.30 0 0 1 1496.34 221.08 L1529.68 214.42 A35.30 35.30 0 0 0 1553.57 241.13 Z" fill="#ffcd55" stroke="#fff" stroke-width="1.2" stroke-linejoin="miter"/><path d="M1496.34 221.08 A69.30 69.30 0 0 1 1514.37 159.45 L1538.86 183.02 A35.30 35.30 0 0 0 1529.68 214.42 Z" fill="#6d757d" stroke="#fff" stroke-width="1.2" stroke-linejoin="miter"/><path d="M1514.37 159.45 A69.30 69.30 0 0 1 1564.30 138.20 L1564.30 172.20 A35.30 35.30 0 0 0 1538.86 183.02 Z" fill="#c3d5a1" stroke="#fff" stroke-width="1.2" stroke-linejoin="miter"/></svg>
<svg class="r" style="left:0;top:0" width="1873" height="300"><circle cx="1783" cy="158.5" r="5.9" fill="#d88183"/></svg>
<svg class="r" style="left:1792.2px;top:152.2px;overflow:hidden" width="60.7" height="10.5" viewBox="0 0 60.7 10.5" preserveAspectRatio="none"><rect x="0.00" y="0.00" width="5.36" height="5.55" fill="#e8e8e8"/><rect x="5.06" y="0.00" width="5.36" height="5.55" fill="#ececec"/><rect x="10.12" y="0.00" width="5.36" height="5.55" fill="#ececec"/><rect x="15.18" y="0.00" width="5.36" height="5.55" fill="#e8e8e8"/><rect x="20.23" y="0.00" width="5.36" height="5.55" fill="#f6f6f6"/><rect x="25.29" y="0.00" width="5.36" height="5.55" fill="#ececec"/><rect x="30.35" y="0.00" width="5.36" height="5.55" fill="#f6f6f6"/><rect x="35.41" y="0.00" width="5.36" height="5.55" fill="#e0e0e0"/><rect x="40.47" y="0.00" width="5.36" height="5.55" fill="#ececec"/><rect x="45.53" y="0.00" width="5.36" height="5.55" fill="#d8d8d8"/><rect x="50.58" y="0.00" width="5.36" height="5.55" fill="#f2f2f2"/><rect x="55.64" y="0.00" width="5.36" height="5.55" fill="#d8d8d8"/><rect x="0.00" y="5.25" width="5.36" height="5.55" fill="#e4e4e4"/><rect x="5.06" y="5.25" width="5.36" height="5.55" fill="#e4e4e4"/><rect x="10.12" y="5.25" width="5.36" height="5.55" fill="#dcdcdc"/><rect x="15.18" y="5.25" width="5.36" height="5.55" fill="#c8c8c8"/><rect x="20.23" y="5.25" width="5.36" height="5.55" fill="#bcbcbc"/><rect x="25.29" y="5.25" width="5.36" height="5.55" fill="#e4e4e4"/><rect x="30.35" y="5.25" width="5.36" height="5.55" fill="#dcdcdc"/><rect x="35.41" y="5.25" width="5.36" height="5.55" fill="#dcdcdc"/><rect x="40.47" y="5.25" width="5.36" height="5.55" fill="#d0d0d0"/><rect x="45.53" y="5.25" width="5.36" height="5.55" fill="#bcbcbc"/><rect x="50.58" y="5.25" width="5.36" height="5.55" fill="#d0d0d0"/><rect x="55.64" y="5.25" width="5.36" height="5.55" fill="#bcbcbc"/></svg>
<svg class="r" style="left:0;top:0" width="1873" height="300"><circle cx="1783" cy="176.1" r="5.9" fill="#ffa500"/></svg>
<svg class="r" style="left:1791px;top:170.3px;overflow:hidden" width="61.9" height="10.7" viewBox="0 0 61.9 10.7" preserveAspectRatio="none"><rect x="0.00" y="0.00" width="5.46" height="5.65" fill="#d8d8d8"/><rect x="5.16" y="0.00" width="5.46" height="5.65" fill="#e8e8e8"/><rect x="10.32" y="0.00" width="5.46" height="5.65" fill="#d8d8d8"/><rect x="15.48" y="0.00" width="5.46" height="5.65" fill="#e0e0e0"/><rect x="20.63" y="0.00" width="5.46" height="5.65" fill="#ececec"/><rect x="25.79" y="0.00" width="5.46" height="5.65" fill="#f2f2f2"/><rect x="30.95" y="0.00" width="5.46" height="5.65" fill="#f6f6f6"/><rect x="36.11" y="0.00" width="5.46" height="5.65" fill="#d8d8d8"/><rect x="41.27" y="0.00" width="5.46" height="5.65" fill="#e8e8e8"/><rect x="46.43" y="0.00" width="5.46" height="5.65" fill="#d8d8d8"/><rect x="51.58" y="0.00" width="5.46" height="5.65" fill="#e8e8e8"/><rect x="56.74" y="0.00" width="5.46" height="5.65" fill="#e0e0e0"/><rect x="0.00" y="5.35" width="5.46" height="5.65" fill="#c8c8c8"/><rect x="5.16" y="5.35" width="5.46" height="5.65" fill="#dcdcdc"/><rect x="10.32" y="5.35" width="5.46" height="5.65" fill="#d4d4d4"/><rect x="15.48" y="5.35" width="5.46" height="5.65" fill="#d0d0d0"/><rect x="20.63" y="5.35" width="5.46" height="5.65" fill="#bcbcbc"/><rect x="25.79" y="5.35" width="5.46" height="5.65" fill="#c8c8c8"/><rect x="30.95" y="5.35" width="5.46" height="5.65" fill="#e4e4e4"/><rect x="36.11" y="5.35" width="5.46" height="5.65" fill="#bcbcbc"/><rect x="41.27" y="5.35" width="5.46" height="5.65" fill="#d0d0d0"/><rect x="46.43" y="5.35" width="5.46" height="5.65" fill="#d0d0d0"/><rect x="51.58" y="5.35" width="5.46" height="5.65" fill="#e4e4e4"/><rect x="56.74" y="5.35" width="5.46" height="5.65" fill="#c8c8c8"/></svg>
<svg class="r" style="left:0;top:0" width="1873" height="300"><circle cx="1783" cy="193.7" r="5.9" fill="#ffcd55"/></svg>
<svg class="r" style="left:1792.7px;top:188.2px;overflow:hidden" width="53.2" height="11.7" viewBox="0 0 53.2 11.7" preserveAspectRatio="none"><rect x="0.00" y="0.00" width="5.14" height="6.15" fill="#e8e8e8"/><rect x="4.84" y="0.00" width="5.14" height="6.15" fill="#f6f6f6"/><rect x="9.67" y="0.00" width="5.14" height="6.15" fill="#d8d8d8"/><rect x="14.51" y="0.00" width="5.14" height="6.15" fill="#e0e0e0"/><rect x="19.35" y="0.00" width="5.14" height="6.15" fill="#e8e8e8"/><rect x="24.18" y="0.00" width="5.14" height="6.15" fill="#d8d8d8"/><rect x="29.02" y="0.00" width="5.14" height="6.15" fill="#f6f6f6"/><rect x="33.85" y="0.00" width="5.14" height="6.15" fill="#f6f6f6"/><rect x="38.69" y="0.00" width="5.14" height="6.15" fill="#d8d8d8"/><rect x="43.53" y="0.00" width="5.14" height="6.15" fill="#e8e8e8"/><rect x="48.36" y="0.00" width="5.14" height="6.15" fill="#ececec"/><rect x="0.00" y="5.85" width="5.14" height="6.15" fill="#bcbcbc"/><rect x="4.84" y="5.85" width="5.14" height="6.15" fill="#b4b4b4"/><rect x="9.67" y="5.85" width="5.14" height="6.15" fill="#c8c8c8"/><rect x="14.51" y="5.85" width="5.14" height="6.15" fill="#b4b4b4"/><rect x="19.35" y="5.85" width="5.14" height="6.15" fill="#b4b4b4"/><rect x="24.18" y="5.85" width="5.14" height="6.15" fill="#e4e4e4"/><rect x="29.02" y="5.85" width="5.14" height="6.15" fill="#dcdcdc"/><rect x="33.85" y="5.85" width="5.14" height="6.15" fill="#b4b4b4"/><rect x="38.69" y="5.85" width="5.14" height="6.15" fill="#b4b4b4"/><rect x="43.53" y="5.85" width="5.14" height="6.15" fill="#b4b4b4"/><rect x="48.36" y="5.85" width="5.14" height="6.15" fill="#dcdcdc"/></svg>
<svg class="r" style="left:0;top:0" width="1873" height="300"><circle cx="1783" cy="211.3" r="5.9" fill="#6d757d"/></svg>
<svg class="r" style="left:1792px;top:207px;overflow:hidden" width="60" height="10" viewBox="0 0 60 10" preserveAspectRatio="none"><rect x="0.00" y="0.00" width="5.30" height="5.30" fill="#f6f6f6"/><rect x="5.00" y="0.00" width="5.30" height="5.30" fill="#ececec"/><rect x="10.00" y="0.00" width="5.30" height="5.30" fill="#f6f6f6"/><rect x="15.00" y="0.00" width="5.30" height="5.30" fill="#f6f6f6"/><rect x="20.00" y="0.00" width="5.30" height="5.30" fill="#f6f6f6"/><rect x="25.00" y="0.00" width="5.30" height="5.30" fill="#e8e8e8"/><rect x="30.00" y="0.00" width="5.30" height="5.30" fill="#f6f6f6"/><rect x="35.00" y="0.00" width="5.30" height="5.30" fill="#f2f2f2"/><rect x="40.00" y="0.00" width="5.30" height="5.30" fill="#d8d8d8"/><rect x="45.00" y="0.00" width="5.30" height="5.30" fill="#f6f6f6"/><rect x="50.00" y="0.00" width="5.30" height="5.30" fill="#f2f2f2"/><rect x="55.00" y="0.00" width="5.30" height="5.30" fill="#f6f6f6"/><rect x="0.00" y="5.00" width="5.30" height="5.30" fill="#c8c8c8"/><rect x="5.00" y="5.00" width="5.30" height="5.30" fill="#c8c8c8"/><rect x="10.00" y="5.00" width="5.30" height="5.30" fill="#bcbcbc"/><rect x="15.00" y="5.00" width="5.30" height="5.30" fill="#d4d4d4"/><rect x="20.00" y="5.00" width="5.30" height="5.30" fill="#dcdcdc"/><rect x="25.00" y="5.00" width="5.30" height="5.30" fill="#e4e4e4"/><rect x="30.00" y="5.00" width="5.30" height="5.30" fill="#c8c8c8"/><rect x="35.00" y="5.00" width="5.30" height="5.30" fill="#e4e4e4"/><rect x="40.00" y="5.00" width="5.30" height="5.30" fill="#d0d0d0"/><rect x="45.00" y="5.00" width="5.30" height="5.30" fill="#d0d0d0"/><rect x="50.00" y="5.00" width="5.30" height="5.30" fill="#b4b4b4"/><rect x="55.00" y="5.00" width="5.30" height="5.30" fill="#d4d4d4"/></svg>
<svg class="r" style="left:0;top:0" width="1873" height="300"><circle cx="1783" cy="228.9" r="5.9" fill="#c3d5a1"/></svg>
<svg class="r" style="left:1792px;top:224.8px;overflow:hidden" width="49" height="8.3" viewBox="0 0 49 8.3" preserveAspectRatio="none"><rect x="0.00" y="0.00" width="5.20" height="4.45" fill="#f2f2f2"/><rect x="4.90" y="0.00" width="5.20" height="4.45" fill="#e8e8e8"/><rect x="9.80" y="0.00" width="5.20" height="4.45" fill="#f6f6f6"/><rect x="14.70" y="0.00" width="5.20" height="4.45" fill="#e8e8e8"/><rect x="19.60" y="0.00" width="5.20" height="4.45" fill="#ececec"/><rect x="24.50" y="0.00" width="5.20" height="4.45" fill="#e0e0e0"/><rect x="29.40" y="0.00" width="5.20" height="4.45" fill="#f2f2f2"/><rect x="34.30" y="0.00" width="5.20" height="4.45" fill="#f6f6f6"/><rect x="39.20" y="0.00" width="5.20" height="4.45" fill="#e8e8e8"/><rect x="44.10" y="0.00" width="5.20" height="4.45" fill="#f2f2f2"/><rect x="0.00" y="4.15" width="5.20" height="4.45" fill="#d0d0d0"/><rect x="4.90" y="4.15" width="5.20" height="4.45" fill="#e4e4e4"/><rect x="9.80" y="4.15" width="5.20" height="4.45" fill="#d0d0d0"/><rect x="14.70" y="4.15" width="5.20" height="4.45" fill="#e4e4e4"/><rect x="19.60" y="4.15" width="5.20" height="4.45" fill="#e4e4e4"/><rect x="24.50" y="4.15" width="5.20" height="4.45" fill="#dcdcdc"/><rect x="29.40" y="4.15" width="5.20" height="4.45" fill="#d4d4d4"/><rect x="34.30" y="4.15" width="5.20" height="4.45" fill="#bcbcbc"/><rect x="39.20" y="4.15" width="5.20" height="4.45" fill="#bcbcbc"/><rect x="44.10" y="4.15" width="5.20" height="4.45" fill="#dcdcdc"/></svg>
<div class="t" style="left:1552.67px;top:117.00px;font-size:11.00px;color:#646b72;font-weight:bold;transform:scaleX(0.8864);">EVENTI - TOP 5 AGENTI</div>
<div class="r" style="left:2px;top:293px;width:322px;height:268px;background:#fff;border:1px solid #cdcdcd;box-sizing:border-box"></div>
<div class="r" style="left:330px;top:293px;width:610px;height:268px;background:#fff;border:1px solid #cdcdcd;box-sizing:border-box"></div>
<div class="r" style="left:945px;top:293px;width:924px;height:268px;background:#fff;border:1px solid #cdcdcd;box-sizing:border-box"></div>
<div class="r" style="left:802px;top:285px;width:25px;height:10px;background:#f3f3f3;border-radius:1px"></div>
<div class="t" style="left:113.00px;top:310.00px;font-size:9.70px;color:#646b72;font-weight:bold;">TOP TECNICHE MITRE</div>
<div class="t" style="left:73.23px;top:337.00px;font-size:9.70px;color:#666666;font-weight:normal;">Modify Registry</div>
<div class="t" style="left:160.37px;top:337.00px;font-size:9.70px;color:#666666;font-weight:normal;transform:scaleX(0.9936);">Stored Data Manipulation</div>
<div class="t" style="left:60.82px;top:355.00px;font-size:9.70px;color:#666666;font-weight:normal;">Data Destruction</div>
<div class="t" style="left:152.72px;top:355.00px;font-size:9.70px;color:#666666;font-weight:normal;">File Deletion</div>
<div class="t" style="left:226.46px;top:355.00px;font-size:9.70px;color:#666666;font-weight:normal;">Service Stop</div>
<svg class="r" style="left:0;top:0" width="400" height="400"><circle cx="64" cy="341.8" r="5.8" fill="#d88183"/><circle cx="150.1" cy="341.8" r="5.8" fill="#ffa500"/><circle cx="51.3" cy="359.7" r="5.8" fill="#ffcd55"/><circle cx="143" cy="359.7" r="5.8" fill="#6d757d"/><circle cx="216.6" cy="359.7" r="5.8" fill="#c3d5a1"/></svg>
<svg class="r" style="left:0;top:0" width="1873" height="857"><path d="M165.10 373.10 A88.50 88.50 0 1 1 156.00 549.63 L160.45 506.56 A45.20 45.20 0 1 0 165.10 416.40 Z" fill="#d88183" stroke="#fff" stroke-width="1.3" stroke-linejoin="miter"/><path d="M156.00 549.63 A88.50 88.50 0 0 1 78.66 442.60 L120.95 451.89 A45.20 45.20 0 0 0 160.45 506.56 Z" fill="#ffa500" stroke="#fff" stroke-width="1.3" stroke-linejoin="miter"/><path d="M78.66 442.60 A88.50 88.50 0 0 1 108.69 393.41 L136.29 426.77 A45.20 45.20 0 0 0 120.95 451.89 Z" fill="#ffcd55" stroke="#fff" stroke-width="1.3" stroke-linejoin="miter"/><path d="M108.69 393.41 A88.50 88.50 0 0 1 162.32 373.14 L163.68 416.42 A45.20 45.20 0 0 0 136.29 426.77 Z" fill="#6d757d" stroke="#fff" stroke-width="1.3" stroke-linejoin="miter"/><path d="M162.32 373.14 A88.50 88.50 0 0 1 165.10 373.10 L165.10 416.40 A45.20 45.20 0 0 0 163.68 416.42 Z" fill="#c3d5a1" stroke="#fff" stroke-width="1.3" stroke-linejoin="miter"/></svg>
<div class="t" style="left:342.44px;top:303.00px;font-size:11.30px;color:#5a6066;font-weight:bold;transform:scaleX(0.8970);">EVENTI CRITICI</div>
<div class="t" style="left:359.77px;top:325.00px;font-size:11.30px;color:#5a6066;font-weight:bold;transform:scaleX(0.8624);">LIVELLO</div>
<div class="t" style="left:620.65px;top:325.00px;font-size:11.30px;color:#5a6066;font-weight:bold;transform:scaleX(0.8915);">DESCRIZIONE</div>
<div class="t" style="left:908.13px;top:325.00px;font-size:11.30px;color:#5a6066;font-weight:bold;transform:scaleX(0.9945);">#</div>
<svg class="r" style="left:0;top:0" width="1873" height="857"><path d="M404.5 328.6 L408.25 323.8 L412 328.6 Z" fill="#666"/><path d="M878.5 329.2 L882.6 324.7 L886.7 329.2 Z M878.5 330.2 L882.6 334.7 L886.7 330.2 Z" fill="#d0d0d0"/><path d="M917.2 329.2 L920.7 324.7 L924.2 329.2 Z M917.2 330.2 L920.7 334.7 L924.2 330.2 Z" fill="#d0d0d0"/></svg>
<div class="r" style="left:343px;top:346px;width:588px;height:1px;background:#555555;"></div>
<div class="r" style="left:340px;top:375px;width:597px;height:43.5px;background:#f2f2f2;"></div>
<div class="r" style="left:340px;top:461px;width:597px;height:1px;background:#e3e3e3;"></div>
<div class="t" style="left:372.21px;top:356.00px;font-size:12.00px;color:#3a3a3a;font-weight:normal;transform:scaleX(0.9867);">14</div>
<div class="t" style="left:424.62px;top:356.00px;font-size:12.00px;color:#3a3a3a;font-weight:normal;transform:scaleX(0.9145);">Powershell script used "Invoke-command" cmdlet to execute code on remote computer</div>
<div class="t" style="left:910.29px;top:356.00px;font-size:12.00px;color:#3a3a3a;font-weight:normal;transform:scaleX(1.0244);">20</div>
<div class="t" style="left:372.08px;top:391.00px;font-size:12.00px;color:#3a3a3a;font-weight:normal;transform:scaleX(1.0218);">15</div>
<div class="t" style="left:424.61px;top:384.00px;font-size:12.00px;color:#3a3a3a;font-weight:normal;transform:scaleX(0.9221);">File with known malware hash detected:</div>
<div class="t" style="left:913.34px;top:391.00px;font-size:12.00px;color:#3a3a3a;font-weight:normal;transform:scaleX(0.9579);">1</div>
<div class="t" style="left:372.08px;top:434.00px;font-size:12.00px;color:#3a3a3a;font-weight:normal;transform:scaleX(1.0218);">15</div>
<div class="t" style="left:424.61px;top:426.00px;font-size:12.00px;color:#3a3a3a;font-weight:normal;transform:scaleX(0.9221);">File with known malware hash detected:</div>
<div class="t" style="left:913.34px;top:434.00px;font-size:12.00px;color:#3a3a3a;font-weight:normal;transform:scaleX(0.9579);">1</div>
<svg class="r" style="left:424.3px;top:399.3px;overflow:hidden" width="417.7" height="11.2" viewBox="0 0 417.7 11.2" preserveAspectRatio="none"><rect x="0.00" y="0.00" width="5.27" height="5.90" fill="#dadadc"/><rect x="4.97" y="0.00" width="5.27" height="5.90" fill="#dfe3ea"/><rect x="9.95" y="0.00" width="5.27" height="5.90" fill="#e6e0d8"/><rect x="14.92" y="0.00" width="5.27" height="5.90" fill="#e4e4e6"/><rect x="19.89" y="0.00" width="5.27" height="5.90" fill="#c8c8cc"/><rect x="24.86" y="0.00" width="5.27" height="5.90" fill="#dfe3ea"/><rect x="29.84" y="0.00" width="5.27" height="5.90" fill="#d4d9e2"/><rect x="34.81" y="0.00" width="5.27" height="5.90" fill="#c8c8cc"/><rect x="39.78" y="0.00" width="5.27" height="5.90" fill="#d4d9e2"/><rect x="44.75" y="0.00" width="5.27" height="5.90" fill="#d4d9e2"/><rect x="49.73" y="0.00" width="5.27" height="5.90" fill="#f0f0f0"/><rect x="54.70" y="0.00" width="5.27" height="5.90" fill="#d4d9e2"/><rect x="59.67" y="0.00" width="5.27" height="5.90" fill="#d0d0d4"/><rect x="64.64" y="0.00" width="5.27" height="5.90" fill="#d4d9e2"/><rect x="69.62" y="0.00" width="5.27" height="5.90" fill="#e4e4e6"/><rect x="74.59" y="0.00" width="5.27" height="5.90" fill="#f0f0f0"/><rect x="79.56" y="0.00" width="5.27" height="5.90" fill="#ececec"/><rect x="84.53" y="0.00" width="5.27" height="5.90" fill="#ececec"/><rect x="89.51" y="0.00" width="5.27" height="5.90" fill="#ececec"/><rect x="94.48" y="0.00" width="5.27" height="5.90" fill="#e4e4e6"/><rect x="99.45" y="0.00" width="5.27" height="5.90" fill="#c8c8cc"/><rect x="104.42" y="0.00" width="5.27" height="5.90" fill="#dadadc"/><rect x="109.40" y="0.00" width="5.27" height="5.90" fill="#ececec"/><rect x="114.37" y="0.00" width="5.27" height="5.90" fill="#f0f0f0"/><rect x="119.34" y="0.00" width="5.27" height="5.90" fill="#c8c8cc"/><rect x="124.32" y="0.00" width="5.27" height="5.90" fill="#d0d0d4"/><rect x="129.29" y="0.00" width="5.27" height="5.90" fill="#d4d9e2"/><rect x="134.26" y="0.00" width="5.27" height="5.90" fill="#e4e4e6"/><rect x="139.23" y="0.00" width="5.27" height="5.90" fill="#dadadc"/><rect x="144.21" y="0.00" width="5.27" height="5.90" fill="#e6e0d8"/><rect x="149.18" y="0.00" width="5.27" height="5.90" fill="#f0f0f0"/><rect x="154.15" y="0.00" width="5.27" height="5.90" fill="#f0f0f0"/><rect x="159.12" y="0.00" width="5.27" height="5.90" fill="#f0f0f0"/><rect x="164.10" y="0.00" width="5.27" height="5.90" fill="#c8c8cc"/><rect x="169.07" y="0.00" width="5.27" height="5.90" fill="#d4d9e2"/><rect x="174.04" y="0.00" width="5.27" height="5.90" fill="#dadadc"/><rect x="179.01" y="0.00" width="5.27" height="5.90" fill="#c8c8cc"/><rect x="183.99" y="0.00" width="5.27" height="5.90" fill="#f0f0f0"/><rect x="188.96" y="0.00" width="5.27" height="5.90" fill="#dfe3ea"/><rect x="193.93" y="0.00" width="5.27" height="5.90" fill="#f0f0f0"/><rect x="198.90" y="0.00" width="5.27" height="5.90" fill="#e6e0d8"/><rect x="203.88" y="0.00" width="5.27" height="5.90" fill="#ececec"/><rect x="208.85" y="0.00" width="5.27" height="5.90" fill="#e4e4e6"/><rect x="213.82" y="0.00" width="5.27" height="5.90" fill="#e6e0d8"/><rect x="218.80" y="0.00" width="5.27" height="5.90" fill="#d4d9e2"/><rect x="223.77" y="0.00" width="5.27" height="5.90" fill="#e4e4e6"/><rect x="228.74" y="0.00" width="5.27" height="5.90" fill="#e6e0d8"/><rect x="233.71" y="0.00" width="5.27" height="5.90" fill="#c8c8cc"/><rect x="238.69" y="0.00" width="5.27" height="5.90" fill="#e4e4e6"/><rect x="243.66" y="0.00" width="5.27" height="5.90" fill="#ececec"/><rect x="248.63" y="0.00" width="5.27" height="5.90" fill="#e6e0d8"/><rect x="253.60" y="0.00" width="5.27" height="5.90" fill="#d0d0d4"/><rect x="258.58" y="0.00" width="5.27" height="5.90" fill="#ececec"/><rect x="263.55" y="0.00" width="5.27" height="5.90" fill="#f0f0f0"/><rect x="268.52" y="0.00" width="5.27" height="5.90" fill="#e4e4e6"/><rect x="273.49" y="0.00" width="5.27" height="5.90" fill="#c8c8cc"/><rect x="278.47" y="0.00" width="5.27" height="5.90" fill="#dfe3ea"/><rect x="283.44" y="0.00" width="5.27" height="5.90" fill="#dadadc"/><rect x="288.41" y="0.00" width="5.27" height="5.90" fill="#c8c8cc"/><rect x="293.38" y="0.00" width="5.27" height="5.90" fill="#dfe3ea"/><rect x="298.36" y="0.00" width="5.27" height="5.90" fill="#ececec"/><rect x="303.33" y="0.00" width="5.27" height="5.90" fill="#c8c8cc"/><rect x="308.30" y="0.00" width="5.27" height="5.90" fill="#e4e4e6"/><rect x="313.27" y="0.00" width="5.27" height="5.90" fill="#d0d0d4"/><rect x="318.25" y="0.00" width="5.27" height="5.90" fill="#d4d9e2"/><rect x="323.22" y="0.00" width="5.27" height="5.90" fill="#e6e0d8"/><rect x="328.19" y="0.00" width="5.27" height="5.90" fill="#c8c8cc"/><rect x="333.17" y="0.00" width="5.27" height="5.90" fill="#f0f0f0"/><rect x="338.14" y="0.00" width="5.27" height="5.90" fill="#e4e4e6"/><rect x="343.11" y="0.00" width="5.27" height="5.90" fill="#dadadc"/><rect x="348.08" y="0.00" width="5.27" height="5.90" fill="#dfe3ea"/><rect x="353.06" y="0.00" width="5.27" height="5.90" fill="#f0f0f0"/><rect x="358.03" y="0.00" width="5.27" height="5.90" fill="#f0f0f0"/><rect x="363.00" y="0.00" width="5.27" height="5.90" fill="#d0d0d4"/><rect x="367.97" y="0.00" width="5.27" height="5.90" fill="#dadadc"/><rect x="372.95" y="0.00" width="5.27" height="5.90" fill="#ececec"/><rect x="377.92" y="0.00" width="5.27" height="5.90" fill="#e4e4e6"/><rect x="382.89" y="0.00" width="5.27" height="5.90" fill="#f0f0f0"/><rect x="387.86" y="0.00" width="5.27" height="5.90" fill="#dfe3ea"/><rect x="392.84" y="0.00" width="5.27" height="5.90" fill="#d4d9e2"/><rect x="397.81" y="0.00" width="5.27" height="5.90" fill="#d4d9e2"/><rect x="402.78" y="0.00" width="5.27" height="5.90" fill="#e4e4e6"/><rect x="407.75" y="0.00" width="5.27" height="5.90" fill="#e4e4e6"/><rect x="412.73" y="0.00" width="5.27" height="5.90" fill="#ececec"/><rect x="0.00" y="5.60" width="5.27" height="5.90" fill="#d8d8d8"/><rect x="4.97" y="5.60" width="5.27" height="5.90" fill="#d8d8d8"/><rect x="9.95" y="5.60" width="5.27" height="5.90" fill="#a8aab4"/><rect x="14.92" y="5.60" width="5.27" height="5.90" fill="#ccc4b8"/><rect x="19.89" y="5.60" width="5.27" height="5.90" fill="#ccc4b8"/><rect x="24.86" y="5.60" width="5.27" height="5.90" fill="#b8bcc8"/><rect x="29.84" y="5.60" width="5.27" height="5.90" fill="#d4d4d8"/><rect x="34.81" y="5.60" width="5.27" height="5.90" fill="#c8c8cc"/><rect x="39.78" y="5.60" width="5.27" height="5.90" fill="#d4d4d8"/><rect x="44.75" y="5.60" width="5.27" height="5.90" fill="#d8d8d8"/><rect x="49.73" y="5.60" width="5.27" height="5.90" fill="#c8c8cc"/><rect x="54.70" y="5.60" width="5.27" height="5.90" fill="#bcbcc2"/><rect x="59.67" y="5.60" width="5.27" height="5.90" fill="#b0b0b8"/><rect x="64.64" y="5.60" width="5.27" height="5.90" fill="#ccc4b8"/><rect x="69.62" y="5.60" width="5.27" height="5.90" fill="#c8c8cc"/><rect x="74.59" y="5.60" width="5.27" height="5.90" fill="#ccc4b8"/><rect x="79.56" y="5.60" width="5.27" height="5.90" fill="#b8bcc8"/><rect x="84.53" y="5.60" width="5.27" height="5.90" fill="#c8c8cc"/><rect x="89.51" y="5.60" width="5.27" height="5.90" fill="#c8c8cc"/><rect x="94.48" y="5.60" width="5.27" height="5.90" fill="#ccc4b8"/><rect x="99.45" y="5.60" width="5.27" height="5.90" fill="#b0b0b8"/><rect x="104.42" y="5.60" width="5.27" height="5.90" fill="#c4c9d2"/><rect x="109.40" y="5.60" width="5.27" height="5.90" fill="#a8aab4"/><rect x="114.37" y="5.60" width="5.27" height="5.90" fill="#c8c8cc"/><rect x="119.34" y="5.60" width="5.27" height="5.90" fill="#b8bcc8"/><rect x="124.32" y="5.60" width="5.27" height="5.90" fill="#d4d4d8"/><rect x="129.29" y="5.60" width="5.27" height="5.90" fill="#d4d4d8"/><rect x="134.26" y="5.60" width="5.27" height="5.90" fill="#b8bcc8"/><rect x="139.23" y="5.60" width="5.27" height="5.90" fill="#d8d8d8"/><rect x="144.21" y="5.60" width="5.27" height="5.90" fill="#b0b0b8"/><rect x="149.18" y="5.60" width="5.27" height="5.90" fill="#b8bcc8"/><rect x="154.15" y="5.60" width="5.27" height="5.90" fill="#d4d4d8"/><rect x="159.12" y="5.60" width="5.27" height="5.90" fill="#b0b0b8"/><rect x="164.10" y="5.60" width="5.27" height="5.90" fill="#b0b0b8"/><rect x="169.07" y="5.60" width="5.27" height="5.90" fill="#d4d4d8"/><rect x="174.04" y="5.60" width="5.27" height="5.90" fill="#c8c8cc"/><rect x="179.01" y="5.60" width="5.27" height="5.90" fill="#a8aab4"/><rect x="183.99" y="5.60" width="5.27" height="5.90" fill="#a8aab4"/><rect x="188.96" y="5.60" width="5.27" height="5.90" fill="#bcbcc2"/><rect x="193.93" y="5.60" width="5.27" height="5.90" fill="#d4d4d8"/><rect x="198.90" y="5.60" width="5.27" height="5.90" fill="#a8aab4"/><rect x="203.88" y="5.60" width="5.27" height="5.90" fill="#b8bcc8"/><rect x="208.85" y="5.60" width="5.27" height="5.90" fill="#d4d4d8"/><rect x="213.82" y="5.60" width="5.27" height="5.90" fill="#c4c9d2"/><rect x="218.80" y="5.60" width="5.27" height="5.90" fill="#ccc4b8"/><rect x="223.77" y="5.60" width="5.27" height="5.90" fill="#a8aab4"/><rect x="228.74" y="5.60" width="5.27" height="5.90" fill="#c4c9d2"/><rect x="233.71" y="5.60" width="5.27" height="5.90" fill="#d4d4d8"/><rect x="238.69" y="5.60" width="5.27" height="5.90" fill="#c8c8cc"/><rect x="243.66" y="5.60" width="5.27" height="5.90" fill="#a8aab4"/><rect x="248.63" y="5.60" width="5.27" height="5.90" fill="#c8c8cc"/><rect x="253.60" y="5.60" width="5.27" height="5.90" fill="#bcbcc2"/><rect x="258.58" y="5.60" width="5.27" height="5.90" fill="#b0b0b8"/><rect x="263.55" y="5.60" width="5.27" height="5.90" fill="#c4c9d2"/><rect x="268.52" y="5.60" width="5.27" height="5.90" fill="#a8aab4"/><rect x="273.49" y="5.60" width="5.27" height="5.90" fill="#c4c9d2"/><rect x="278.47" y="5.60" width="5.27" height="5.90" fill="#d4d4d8"/><rect x="283.44" y="5.60" width="5.27" height="5.90" fill="#a8aab4"/><rect x="288.41" y="5.60" width="5.27" height="5.90" fill="#a8aab4"/><rect x="293.38" y="5.60" width="5.27" height="5.90" fill="#ccc4b8"/><rect x="298.36" y="5.60" width="5.27" height="5.90" fill="#d8d8d8"/><rect x="303.33" y="5.60" width="5.27" height="5.90" fill="#d4d4d8"/><rect x="308.30" y="5.60" width="5.27" height="5.90" fill="#b8bcc8"/><rect x="313.27" y="5.60" width="5.27" height="5.90" fill="#c8c8cc"/><rect x="318.25" y="5.60" width="5.27" height="5.90" fill="#c8c8cc"/><rect x="323.22" y="5.60" width="5.27" height="5.90" fill="#b8bcc8"/><rect x="328.19" y="5.60" width="5.27" height="5.90" fill="#b8bcc8"/><rect x="333.17" y="5.60" width="5.27" height="5.90" fill="#bcbcc2"/><rect x="338.14" y="5.60" width="5.27" height="5.90" fill="#d4d4d8"/><rect x="343.11" y="5.60" width="5.27" height="5.90" fill="#d4d4d8"/><rect x="348.08" y="5.60" width="5.27" height="5.90" fill="#a8aab4"/><rect x="353.06" y="5.60" width="5.27" height="5.90" fill="#bcbcc2"/><rect x="358.03" y="5.60" width="5.27" height="5.90" fill="#c4c9d2"/><rect x="363.00" y="5.60" width="5.27" height="5.90" fill="#bcbcc2"/><rect x="367.97" y="5.60" width="5.27" height="5.90" fill="#d8d8d8"/><rect x="372.95" y="5.60" width="5.27" height="5.90" fill="#d8d8d8"/><rect x="377.92" y="5.60" width="5.27" height="5.90" fill="#bcbcc2"/><rect x="382.89" y="5.60" width="5.27" height="5.90" fill="#b0b0b8"/><rect x="387.86" y="5.60" width="5.27" height="5.90" fill="#c4c9d2"/><rect x="392.84" y="5.60" width="5.27" height="5.90" fill="#c4c9d2"/><rect x="397.81" y="5.60" width="5.27" height="5.90" fill="#c8c8cc"/><rect x="402.78" y="5.60" width="5.27" height="5.90" fill="#d8d8d8"/><rect x="407.75" y="5.60" width="5.27" height="5.90" fill="#b0b0b8"/><rect x="412.73" y="5.60" width="5.27" height="5.90" fill="#a8aab4"/></svg>
<svg class="r" style="left:424.3px;top:441.8px;overflow:hidden" width="431" height="12.2" viewBox="0 0 431 12.2" preserveAspectRatio="none"><rect x="0.00" y="0.00" width="5.31" height="6.40" fill="#e6e0d8"/><rect x="5.01" y="0.00" width="5.31" height="6.40" fill="#d4d9e2"/><rect x="10.02" y="0.00" width="5.31" height="6.40" fill="#e6e0d8"/><rect x="15.03" y="0.00" width="5.31" height="6.40" fill="#ececec"/><rect x="20.05" y="0.00" width="5.31" height="6.40" fill="#ececec"/><rect x="25.06" y="0.00" width="5.31" height="6.40" fill="#e6e0d8"/><rect x="30.07" y="0.00" width="5.31" height="6.40" fill="#e4e4e6"/><rect x="35.08" y="0.00" width="5.31" height="6.40" fill="#e6e0d8"/><rect x="40.09" y="0.00" width="5.31" height="6.40" fill="#d4d9e2"/><rect x="45.10" y="0.00" width="5.31" height="6.40" fill="#d4d9e2"/><rect x="50.12" y="0.00" width="5.31" height="6.40" fill="#e4e4e6"/><rect x="55.13" y="0.00" width="5.31" height="6.40" fill="#f0f0f0"/><rect x="60.14" y="0.00" width="5.31" height="6.40" fill="#dfe3ea"/><rect x="65.15" y="0.00" width="5.31" height="6.40" fill="#ececec"/><rect x="70.16" y="0.00" width="5.31" height="6.40" fill="#ececec"/><rect x="75.17" y="0.00" width="5.31" height="6.40" fill="#d4d9e2"/><rect x="80.19" y="0.00" width="5.31" height="6.40" fill="#f0f0f0"/><rect x="85.20" y="0.00" width="5.31" height="6.40" fill="#ececec"/><rect x="90.21" y="0.00" width="5.31" height="6.40" fill="#e6e0d8"/><rect x="95.22" y="0.00" width="5.31" height="6.40" fill="#dfe3ea"/><rect x="100.23" y="0.00" width="5.31" height="6.40" fill="#d4d9e2"/><rect x="105.24" y="0.00" width="5.31" height="6.40" fill="#d0d0d4"/><rect x="110.26" y="0.00" width="5.31" height="6.40" fill="#e6e0d8"/><rect x="115.27" y="0.00" width="5.31" height="6.40" fill="#d4d9e2"/><rect x="120.28" y="0.00" width="5.31" height="6.40" fill="#e4e4e6"/><rect x="125.29" y="0.00" width="5.31" height="6.40" fill="#f0f0f0"/><rect x="130.30" y="0.00" width="5.31" height="6.40" fill="#ececec"/><rect x="135.31" y="0.00" width="5.31" height="6.40" fill="#c8c8cc"/><rect x="140.33" y="0.00" width="5.31" height="6.40" fill="#d4d9e2"/><rect x="145.34" y="0.00" width="5.31" height="6.40" fill="#d4d9e2"/><rect x="150.35" y="0.00" width="5.31" height="6.40" fill="#d4d9e2"/><rect x="155.36" y="0.00" width="5.31" height="6.40" fill="#c8c8cc"/><rect x="160.37" y="0.00" width="5.31" height="6.40" fill="#e4e4e6"/><rect x="165.38" y="0.00" width="5.31" height="6.40" fill="#d0d0d4"/><rect x="170.40" y="0.00" width="5.31" height="6.40" fill="#dadadc"/><rect x="175.41" y="0.00" width="5.31" height="6.40" fill="#e4e4e6"/><rect x="180.42" y="0.00" width="5.31" height="6.40" fill="#e6e0d8"/><rect x="185.43" y="0.00" width="5.31" height="6.40" fill="#c8c8cc"/><rect x="190.44" y="0.00" width="5.31" height="6.40" fill="#e4e4e6"/><rect x="195.45" y="0.00" width="5.31" height="6.40" fill="#d0d0d4"/><rect x="200.47" y="0.00" width="5.31" height="6.40" fill="#ececec"/><rect x="205.48" y="0.00" width="5.31" height="6.40" fill="#ececec"/><rect x="210.49" y="0.00" width="5.31" height="6.40" fill="#dadadc"/><rect x="215.50" y="0.00" width="5.31" height="6.40" fill="#dfe3ea"/><rect x="220.51" y="0.00" width="5.31" height="6.40" fill="#d0d0d4"/><rect x="225.52" y="0.00" width="5.31" height="6.40" fill="#ececec"/><rect x="230.53" y="0.00" width="5.31" height="6.40" fill="#ececec"/><rect x="235.55" y="0.00" width="5.31" height="6.40" fill="#e6e0d8"/><rect x="240.56" y="0.00" width="5.31" height="6.40" fill="#ececec"/><rect x="245.57" y="0.00" width="5.31" height="6.40" fill="#c8c8cc"/><rect x="250.58" y="0.00" width="5.31" height="6.40" fill="#dfe3ea"/><rect x="255.59" y="0.00" width="5.31" height="6.40" fill="#ececec"/><rect x="260.60" y="0.00" width="5.31" height="6.40" fill="#c8c8cc"/><rect x="265.62" y="0.00" width="5.31" height="6.40" fill="#c8c8cc"/><rect x="270.63" y="0.00" width="5.31" height="6.40" fill="#dfe3ea"/><rect x="275.64" y="0.00" width="5.31" height="6.40" fill="#d4d9e2"/><rect x="280.65" y="0.00" width="5.31" height="6.40" fill="#ececec"/><rect x="285.66" y="0.00" width="5.31" height="6.40" fill="#dfe3ea"/><rect x="290.67" y="0.00" width="5.31" height="6.40" fill="#e4e4e6"/><rect x="295.69" y="0.00" width="5.31" height="6.40" fill="#ececec"/><rect x="300.70" y="0.00" width="5.31" height="6.40" fill="#e6e0d8"/><rect x="305.71" y="0.00" width="5.31" height="6.40" fill="#e6e0d8"/><rect x="310.72" y="0.00" width="5.31" height="6.40" fill="#f0f0f0"/><rect x="315.73" y="0.00" width="5.31" height="6.40" fill="#dfe3ea"/><rect x="320.74" y="0.00" width="5.31" height="6.40" fill="#dfe3ea"/><rect x="325.76" y="0.00" width="5.31" height="6.40" fill="#e6e0d8"/><rect x="330.77" y="0.00" width="5.31" height="6.40" fill="#d0d0d4"/><rect x="335.78" y="0.00" width="5.31" height="6.40" fill="#ececec"/><rect x="340.79" y="0.00" width="5.31" height="6.40" fill="#f0f0f0"/><rect x="345.80" y="0.00" width="5.31" height="6.40" fill="#dfe3ea"/><rect x="350.81" y="0.00" width="5.31" height="6.40" fill="#dfe3ea"/><rect x="355.83" y="0.00" width="5.31" height="6.40" fill="#dadadc"/><rect x="360.84" y="0.00" width="5.31" height="6.40" fill="#ececec"/><rect x="365.85" y="0.00" width="5.31" height="6.40" fill="#dfe3ea"/><rect x="370.86" y="0.00" width="5.31" height="6.40" fill="#e4e4e6"/><rect x="375.87" y="0.00" width="5.31" height="6.40" fill="#dadadc"/><rect x="380.88" y="0.00" width="5.31" height="6.40" fill="#f0f0f0"/><rect x="385.90" y="0.00" width="5.31" height="6.40" fill="#e6e0d8"/><rect x="390.91" y="0.00" width="5.31" height="6.40" fill="#dfe3ea"/><rect x="395.92" y="0.00" width="5.31" height="6.40" fill="#dadadc"/><rect x="400.93" y="0.00" width="5.31" height="6.40" fill="#c8c8cc"/><rect x="405.94" y="0.00" width="5.31" height="6.40" fill="#d0d0d4"/><rect x="410.95" y="0.00" width="5.31" height="6.40" fill="#c8c8cc"/><rect x="415.97" y="0.00" width="5.31" height="6.40" fill="#d4d9e2"/><rect x="420.98" y="0.00" width="5.31" height="6.40" fill="#c8c8cc"/><rect x="425.99" y="0.00" width="5.31" height="6.40" fill="#d0d0d4"/><rect x="0.00" y="6.10" width="5.31" height="6.40" fill="#a8aab4"/><rect x="5.01" y="6.10" width="5.31" height="6.40" fill="#d4d4d8"/><rect x="10.02" y="6.10" width="5.31" height="6.40" fill="#a8aab4"/><rect x="15.03" y="6.10" width="5.31" height="6.40" fill="#d8d8d8"/><rect x="20.05" y="6.10" width="5.31" height="6.40" fill="#d4d4d8"/><rect x="25.06" y="6.10" width="5.31" height="6.40" fill="#d8d8d8"/><rect x="30.07" y="6.10" width="5.31" height="6.40" fill="#c8c8cc"/><rect x="35.08" y="6.10" width="5.31" height="6.40" fill="#c8c8cc"/><rect x="40.09" y="6.10" width="5.31" height="6.40" fill="#d4d4d8"/><rect x="45.10" y="6.10" width="5.31" height="6.40" fill="#ccc4b8"/><rect x="50.12" y="6.10" width="5.31" height="6.40" fill="#d8d8d8"/><rect x="55.13" y="6.10" width="5.31" height="6.40" fill="#d8d8d8"/><rect x="60.14" y="6.10" width="5.31" height="6.40" fill="#d4d4d8"/><rect x="65.15" y="6.10" width="5.31" height="6.40" fill="#c8c8cc"/><rect x="70.16" y="6.10" width="5.31" height="6.40" fill="#d8d8d8"/><rect x="75.17" y="6.10" width="5.31" height="6.40" fill="#bcbcc2"/><rect x="80.19" y="6.10" width="5.31" height="6.40" fill="#b0b0b8"/><rect x="85.20" y="6.10" width="5.31" height="6.40" fill="#d4d4d8"/><rect x="90.21" y="6.10" width="5.31" height="6.40" fill="#c8c8cc"/><rect x="95.22" y="6.10" width="5.31" height="6.40" fill="#c8c8cc"/><rect x="100.23" y="6.10" width="5.31" height="6.40" fill="#bcbcc2"/><rect x="105.24" y="6.10" width="5.31" height="6.40" fill="#d8d8d8"/><rect x="110.26" y="6.10" width="5.31" height="6.40" fill="#b8bcc8"/><rect x="115.27" y="6.10" width="5.31" height="6.40" fill="#c8c8cc"/><rect x="120.28" y="6.10" width="5.31" height="6.40" fill="#ccc4b8"/><rect x="125.29" y="6.10" width="5.31" height="6.40" fill="#b0b0b8"/><rect x="130.30" y="6.10" width="5.31" height="6.40" fill="#a8aab4"/><rect x="135.31" y="6.10" width="5.31" height="6.40" fill="#bcbcc2"/><rect x="140.33" y="6.10" width="5.31" height="6.40" fill="#b0b0b8"/><rect x="145.34" y="6.10" width="5.31" height="6.40" fill="#b8bcc8"/><rect x="150.35" y="6.10" width="5.31" height="6.40" fill="#d8d8d8"/><rect x="155.36" y="6.10" width="5.31" height="6.40" fill="#c8c8cc"/><rect x="160.37" y="6.10" width="5.31" height="6.40" fill="#a8aab4"/><rect x="165.38" y="6.10" width="5.31" height="6.40" fill="#c4c9d2"/><rect x="170.40" y="6.10" width="5.31" height="6.40" fill="#b8bcc8"/><rect x="175.41" y="6.10" width="5.31" height="6.40" fill="#d8d8d8"/><rect x="180.42" y="6.10" width="5.31" height="6.40" fill="#b0b0b8"/><rect x="185.43" y="6.10" width="5.31" height="6.40" fill="#b0b0b8"/><rect x="190.44" y="6.10" width="5.31" height="6.40" fill="#d8d8d8"/><rect x="195.45" y="6.10" width="5.31" height="6.40" fill="#d4d4d8"/><rect x="200.47" y="6.10" width="5.31" height="6.40" fill="#bcbcc2"/><rect x="205.48" y="6.10" width="5.31" height="6.40" fill="#b0b0b8"/><rect x="210.49" y="6.10" width="5.31" height="6.40" fill="#d8d8d8"/><rect x="215.50" y="6.10" width="5.31" height="6.40" fill="#d8d8d8"/><rect x="220.51" y="6.10" width="5.31" height="6.40" fill="#b0b0b8"/><rect x="225.52" y="6.10" width="5.31" height="6.40" fill="#bcbcc2"/><rect x="230.53" y="6.10" width="5.31" height="6.40" fill="#a8aab4"/><rect x="235.55" y="6.10" width="5.31" height="6.40" fill="#b0b0b8"/><rect x="240.56" y="6.10" width="5.31" height="6.40" fill="#c8c8cc"/><rect x="245.57" y="6.10" width="5.31" height="6.40" fill="#c8c8cc"/><rect x="250.58" y="6.10" width="5.31" height="6.40" fill="#b8bcc8"/><rect x="255.59" y="6.10" width="5.31" height="6.40" fill="#c8c8cc"/><rect x="260.60" y="6.10" width="5.31" height="6.40" fill="#ccc4b8"/><rect x="265.62" y="6.10" width="5.31" height="6.40" fill="#a8aab4"/><rect x="270.63" y="6.10" width="5.31" height="6.40" fill="#a8aab4"/><rect x="275.64" y="6.10" width="5.31" height="6.40" fill="#b8bcc8"/><rect x="280.65" y="6.10" width="5.31" height="6.40" fill="#b8bcc8"/><rect x="285.66" y="6.10" width="5.31" height="6.40" fill="#d8d8d8"/><rect x="290.67" y="6.10" width="5.31" height="6.40" fill="#ccc4b8"/><rect x="295.69" y="6.10" width="5.31" height="6.40" fill="#c4c9d2"/><rect x="300.70" y="6.10" width="5.31" height="6.40" fill="#d4d4d8"/><rect x="305.71" y="6.10" width="5.31" height="6.40" fill="#b0b0b8"/><rect x="310.72" y="6.10" width="5.31" height="6.40" fill="#b0b0b8"/><rect x="315.73" y="6.10" width="5.31" height="6.40" fill="#bcbcc2"/><rect x="320.74" y="6.10" width="5.31" height="6.40" fill="#a8aab4"/><rect x="325.76" y="6.10" width="5.31" height="6.40" fill="#a8aab4"/><rect x="330.77" y="6.10" width="5.31" height="6.40" fill="#a8aab4"/><rect x="335.78" y="6.10" width="5.31" height="6.40" fill="#d8d8d8"/><rect x="340.79" y="6.10" width="5.31" height="6.40" fill="#d8d8d8"/><rect x="345.80" y="6.10" width="5.31" height="6.40" fill="#b8bcc8"/><rect x="350.81" y="6.10" width="5.31" height="6.40" fill="#a8aab4"/><rect x="355.83" y="6.10" width="5.31" height="6.40" fill="#a8aab4"/><rect x="360.84" y="6.10" width="5.31" height="6.40" fill="#bcbcc2"/><rect x="365.85" y="6.10" width="5.31" height="6.40" fill="#c4c9d2"/><rect x="370.86" y="6.10" width="5.31" height="6.40" fill="#b0b0b8"/><rect x="375.87" y="6.10" width="5.31" height="6.40" fill="#c4c9d2"/><rect x="380.88" y="6.10" width="5.31" height="6.40" fill="#d8d8d8"/><rect x="385.90" y="6.10" width="5.31" height="6.40" fill="#a8aab4"/><rect x="390.91" y="6.10" width="5.31" height="6.40" fill="#bcbcc2"/><rect x="395.92" y="6.10" width="5.31" height="6.40" fill="#c4c9d2"/><rect x="400.93" y="6.10" width="5.31" height="6.40" fill="#b0b0b8"/><rect x="405.94" y="6.10" width="5.31" height="6.40" fill="#ccc4b8"/><rect x="410.95" y="6.10" width="5.31" height="6.40" fill="#b8bcc8"/><rect x="415.97" y="6.10" width="5.31" height="6.40" fill="#d8d8d8"/><rect x="420.98" y="6.10" width="5.31" height="6.40" fill="#d4d4d8"/><rect x="425.99" y="6.10" width="5.31" height="6.40" fill="#c8c8cc"/></svg>
<div class="t" style="left:1321.27px;top:310.00px;font-size:9.70px;color:#646b72;font-weight:bold;">EVOLUZIONE EVENTI - TOP 5 AGENTI</div>
<div class="r" style="left:1161.2px;top:337.4px;width:32.2px;height:9.3px;background:#d88183;"></div>
<svg class="r" style="left:1197.7px;top:336.5px;overflow:hidden" width="61.1" height="11" viewBox="0 0 61.1 11" preserveAspectRatio="none"><rect x="0.00" y="0.00" width="5.85" height="5.80" fill="#d8d8d8"/><rect x="5.55" y="0.00" width="5.85" height="5.80" fill="#e0e0e0"/><rect x="11.11" y="0.00" width="5.85" height="5.80" fill="#e0e0e0"/><rect x="16.66" y="0.00" width="5.85" height="5.80" fill="#f2f2f2"/><rect x="22.22" y="0.00" width="5.85" height="5.80" fill="#ececec"/><rect x="27.77" y="0.00" width="5.85" height="5.80" fill="#e0e0e0"/><rect x="33.33" y="0.00" width="5.85" height="5.80" fill="#d8d8d8"/><rect x="38.88" y="0.00" width="5.85" height="5.80" fill="#ececec"/><rect x="44.44" y="0.00" width="5.85" height="5.80" fill="#d8d8d8"/><rect x="49.99" y="0.00" width="5.85" height="5.80" fill="#d8d8d8"/><rect x="55.55" y="0.00" width="5.85" height="5.80" fill="#e8e8e8"/><rect x="0.00" y="5.50" width="5.85" height="5.80" fill="#d0d0d0"/><rect x="5.55" y="5.50" width="5.85" height="5.80" fill="#e4e4e4"/><rect x="11.11" y="5.50" width="5.85" height="5.80" fill="#c8c8c8"/><rect x="16.66" y="5.50" width="5.85" height="5.80" fill="#bcbcbc"/><rect x="22.22" y="5.50" width="5.85" height="5.80" fill="#bcbcbc"/><rect x="27.77" y="5.50" width="5.85" height="5.80" fill="#b4b4b4"/><rect x="33.33" y="5.50" width="5.85" height="5.80" fill="#d0d0d0"/><rect x="38.88" y="5.50" width="5.85" height="5.80" fill="#dcdcdc"/><rect x="44.44" y="5.50" width="5.85" height="5.80" fill="#d0d0d0"/><rect x="49.99" y="5.50" width="5.85" height="5.80" fill="#d4d4d4"/><rect x="55.55" y="5.50" width="5.85" height="5.80" fill="#e4e4e4"/></svg>
<div class="r" style="left:1265.5px;top:337.4px;width:32.2px;height:9.3px;background:#ffa500;"></div>
<svg class="r" style="left:1302.3px;top:336.5px;overflow:hidden" width="59.8" height="11" viewBox="0 0 59.8 11" preserveAspectRatio="none"><rect x="0.00" y="0.00" width="5.74" height="5.80" fill="#ececec"/><rect x="5.44" y="0.00" width="5.74" height="5.80" fill="#f6f6f6"/><rect x="10.87" y="0.00" width="5.74" height="5.80" fill="#ececec"/><rect x="16.31" y="0.00" width="5.74" height="5.80" fill="#d8d8d8"/><rect x="21.75" y="0.00" width="5.74" height="5.80" fill="#ececec"/><rect x="27.18" y="0.00" width="5.74" height="5.80" fill="#f6f6f6"/><rect x="32.62" y="0.00" width="5.74" height="5.80" fill="#e8e8e8"/><rect x="38.05" y="0.00" width="5.74" height="5.80" fill="#f6f6f6"/><rect x="43.49" y="0.00" width="5.74" height="5.80" fill="#d8d8d8"/><rect x="48.93" y="0.00" width="5.74" height="5.80" fill="#e0e0e0"/><rect x="54.36" y="0.00" width="5.74" height="5.80" fill="#f2f2f2"/><rect x="0.00" y="5.50" width="5.74" height="5.80" fill="#d0d0d0"/><rect x="5.44" y="5.50" width="5.74" height="5.80" fill="#b4b4b4"/><rect x="10.87" y="5.50" width="5.74" height="5.80" fill="#d0d0d0"/><rect x="16.31" y="5.50" width="5.74" height="5.80" fill="#e4e4e4"/><rect x="21.75" y="5.50" width="5.74" height="5.80" fill="#d4d4d4"/><rect x="27.18" y="5.50" width="5.74" height="5.80" fill="#c8c8c8"/><rect x="32.62" y="5.50" width="5.74" height="5.80" fill="#b4b4b4"/><rect x="38.05" y="5.50" width="5.74" height="5.80" fill="#dcdcdc"/><rect x="43.49" y="5.50" width="5.74" height="5.80" fill="#dcdcdc"/><rect x="48.93" y="5.50" width="5.74" height="5.80" fill="#d4d4d4"/><rect x="54.36" y="5.50" width="5.74" height="5.80" fill="#d4d4d4"/></svg>
<div class="r" style="left:1369.6px;top:337.4px;width:32.2px;height:9.3px;background:#ffcd55;"></div>
<svg class="r" style="left:1406px;top:336.5px;overflow:hidden" width="52.7" height="11" viewBox="0 0 52.7 11" preserveAspectRatio="none"><rect x="0.00" y="0.00" width="5.57" height="5.80" fill="#d8d8d8"/><rect x="5.27" y="0.00" width="5.57" height="5.80" fill="#d8d8d8"/><rect x="10.54" y="0.00" width="5.57" height="5.80" fill="#d8d8d8"/><rect x="15.81" y="0.00" width="5.57" height="5.80" fill="#ececec"/><rect x="21.08" y="0.00" width="5.57" height="5.80" fill="#ececec"/><rect x="26.35" y="0.00" width="5.57" height="5.80" fill="#e8e8e8"/><rect x="31.62" y="0.00" width="5.57" height="5.80" fill="#f2f2f2"/><rect x="36.89" y="0.00" width="5.57" height="5.80" fill="#ececec"/><rect x="42.16" y="0.00" width="5.57" height="5.80" fill="#ececec"/><rect x="47.43" y="0.00" width="5.57" height="5.80" fill="#e8e8e8"/><rect x="0.00" y="5.50" width="5.57" height="5.80" fill="#b4b4b4"/><rect x="5.27" y="5.50" width="5.57" height="5.80" fill="#d4d4d4"/><rect x="10.54" y="5.50" width="5.57" height="5.80" fill="#c8c8c8"/><rect x="15.81" y="5.50" width="5.57" height="5.80" fill="#bcbcbc"/><rect x="21.08" y="5.50" width="5.57" height="5.80" fill="#d4d4d4"/><rect x="26.35" y="5.50" width="5.57" height="5.80" fill="#dcdcdc"/><rect x="31.62" y="5.50" width="5.57" height="5.80" fill="#e4e4e4"/><rect x="36.89" y="5.50" width="5.57" height="5.80" fill="#dcdcdc"/><rect x="42.16" y="5.50" width="5.57" height="5.80" fill="#dcdcdc"/><rect x="47.43" y="5.50" width="5.57" height="5.80" fill="#b4b4b4"/></svg>
<div class="r" style="left:1465.5px;top:337.4px;width:32.2px;height:9.3px;background:#6d757d;"></div>
<svg class="r" style="left:1501.9px;top:336.5px;overflow:hidden" width="59.8" height="11" viewBox="0 0 59.8 11" preserveAspectRatio="none"><rect x="0.00" y="0.00" width="5.74" height="5.80" fill="#f2f2f2"/><rect x="5.44" y="0.00" width="5.74" height="5.80" fill="#e8e8e8"/><rect x="10.87" y="0.00" width="5.74" height="5.80" fill="#f6f6f6"/><rect x="16.31" y="0.00" width="5.74" height="5.80" fill="#e8e8e8"/><rect x="21.75" y="0.00" width="5.74" height="5.80" fill="#f2f2f2"/><rect x="27.18" y="0.00" width="5.74" height="5.80" fill="#d8d8d8"/><rect x="32.62" y="0.00" width="5.74" height="5.80" fill="#d8d8d8"/><rect x="38.05" y="0.00" width="5.74" height="5.80" fill="#e0e0e0"/><rect x="43.49" y="0.00" width="5.74" height="5.80" fill="#d8d8d8"/><rect x="48.93" y="0.00" width="5.74" height="5.80" fill="#d8d8d8"/><rect x="54.36" y="0.00" width="5.74" height="5.80" fill="#ececec"/><rect x="0.00" y="5.50" width="5.74" height="5.80" fill="#d0d0d0"/><rect x="5.44" y="5.50" width="5.74" height="5.80" fill="#c8c8c8"/><rect x="10.87" y="5.50" width="5.74" height="5.80" fill="#c8c8c8"/><rect x="16.31" y="5.50" width="5.74" height="5.80" fill="#d4d4d4"/><rect x="21.75" y="5.50" width="5.74" height="5.80" fill="#b4b4b4"/><rect x="27.18" y="5.50" width="5.74" height="5.80" fill="#d4d4d4"/><rect x="32.62" y="5.50" width="5.74" height="5.80" fill="#e4e4e4"/><rect x="38.05" y="5.50" width="5.74" height="5.80" fill="#bcbcbc"/><rect x="43.49" y="5.50" width="5.74" height="5.80" fill="#b4b4b4"/><rect x="48.93" y="5.50" width="5.74" height="5.80" fill="#b4b4b4"/><rect x="54.36" y="5.50" width="5.74" height="5.80" fill="#d4d4d4"/></svg>
<div class="r" style="left:1570.1px;top:337.4px;width:32.2px;height:9.3px;background:#c3d5a1;"></div>
<svg class="r" style="left:1606px;top:336.5px;overflow:hidden" width="52.8" height="11" viewBox="0 0 52.8 11" preserveAspectRatio="none"><rect x="0.00" y="0.00" width="5.58" height="5.80" fill="#e8e8e8"/><rect x="5.28" y="0.00" width="5.58" height="5.80" fill="#e8e8e8"/><rect x="10.56" y="0.00" width="5.58" height="5.80" fill="#ececec"/><rect x="15.84" y="0.00" width="5.58" height="5.80" fill="#d8d8d8"/><rect x="21.12" y="0.00" width="5.58" height="5.80" fill="#ececec"/><rect x="26.40" y="0.00" width="5.58" height="5.80" fill="#f2f2f2"/><rect x="31.68" y="0.00" width="5.58" height="5.80" fill="#e8e8e8"/><rect x="36.96" y="0.00" width="5.58" height="5.80" fill="#f6f6f6"/><rect x="42.24" y="0.00" width="5.58" height="5.80" fill="#f6f6f6"/><rect x="47.52" y="0.00" width="5.58" height="5.80" fill="#e0e0e0"/><rect x="0.00" y="5.50" width="5.58" height="5.80" fill="#d0d0d0"/><rect x="5.28" y="5.50" width="5.58" height="5.80" fill="#b4b4b4"/><rect x="10.56" y="5.50" width="5.58" height="5.80" fill="#dcdcdc"/><rect x="15.84" y="5.50" width="5.58" height="5.80" fill="#d0d0d0"/><rect x="21.12" y="5.50" width="5.58" height="5.80" fill="#d4d4d4"/><rect x="26.40" y="5.50" width="5.58" height="5.80" fill="#e4e4e4"/><rect x="31.68" y="5.50" width="5.58" height="5.80" fill="#e4e4e4"/><rect x="36.96" y="5.50" width="5.58" height="5.80" fill="#bcbcbc"/><rect x="42.24" y="5.50" width="5.58" height="5.80" fill="#bcbcbc"/><rect x="47.52" y="5.50" width="5.58" height="5.80" fill="#dcdcdc"/></svg>
<svg class="r" style="left:0;top:0" width="1873" height="857"><line x1="987" y1="529.50" x2="1856" y2="529.50" stroke="#dedede" stroke-width="1"/><line x1="987" y1="494.50" x2="1856" y2="494.50" stroke="#eaeaea" stroke-width="1"/><line x1="987" y1="459.50" x2="1856" y2="459.50" stroke="#eaeaea" stroke-width="1"/><line x1="987" y1="425.50" x2="1856" y2="425.50" stroke="#eaeaea" stroke-width="1"/><line x1="987" y1="390.50" x2="1856" y2="390.50" stroke="#eaeaea" stroke-width="1"/><line x1="987" y1="355.50" x2="1856" y2="355.50" stroke="#eaeaea" stroke-width="1"/><line x1="993.50" y1="355.00" x2="993.50" y2="536" stroke="#eaeaea" stroke-width="1"/><line x1="1010.50" y1="355.00" x2="1010.50" y2="536" stroke="#eaeaea" stroke-width="1"/><line x1="1028.50" y1="355.00" x2="1028.50" y2="536" stroke="#eaeaea" stroke-width="1"/><line x1="1046.50" y1="355.00" x2="1046.50" y2="536" stroke="#eaeaea" stroke-width="1"/><line x1="1063.50" y1="355.00" x2="1063.50" y2="536" stroke="#eaeaea" stroke-width="1"/><line x1="1081.50" y1="355.00" x2="1081.50" y2="536" stroke="#eaeaea" stroke-width="1"/><line x1="1098.50" y1="355.00" x2="1098.50" y2="536" stroke="#eaeaea" stroke-width="1"/><line x1="1116.50" y1="355.00" x2="1116.50" y2="536" stroke="#eaeaea" stroke-width="1"/><line x1="1134.50" y1="355.00" x2="1134.50" y2="536" stroke="#eaeaea" stroke-width="1"/><line x1="1151.50" y1="355.00" x2="1151.50" y2="536" stroke="#eaeaea" stroke-width="1"/><line x1="1169.50" y1="355.00" x2="1169.50" y2="536" stroke="#eaeaea" stroke-width="1"/><line x1="1186.50" y1="355.00" x2="1186.50" y2="536" stroke="#eaeaea" stroke-width="1"/><line x1="1204.50" y1="355.00" x2="1204.50" y2="536" stroke="#eaeaea" stroke-width="1"/><line x1="1221.50" y1="355.00" x2="1221.50" y2="536" stroke="#eaeaea" stroke-width="1"/><line x1="1239.50" y1="355.00" x2="1239.50" y2="536" stroke="#eaeaea" stroke-width="1"/><line x1="1257.50" y1="355.00" x2="1257.50" y2="536" stroke="#eaeaea" stroke-width="1"/><line x1="1274.50" y1="355.00" x2="1274.50" y2="536" stroke="#eaeaea" stroke-width="1"/><line x1="1292.50" y1="355.00" x2="1292.50" y2="536" stroke="#eaeaea" stroke-width="1"/><line x1="1309.50" y1="355.00" x2="1309.50" y2="536" stroke="#eaeaea" stroke-width="1"/><line x1="1327.50" y1="355.00" x2="1327.50" y2="536" stroke="#eaeaea" stroke-width="1"/><line x1="1345.50" y1="355.00" x2="1345.50" y2="536" stroke="#eaeaea" stroke-width="1"/><line x1="1362.50" y1="355.00" x2="1362.50" y2="536" stroke="#eaeaea" stroke-width="1"/><line x1="1380.50" y1="355.00" x2="1380.50" y2="536" stroke="#eaeaea" stroke-width="1"/><line x1="1397.50" y1="355.00" x2="1397.50" y2="536" stroke="#eaeaea" stroke-width="1"/><line x1="1415.50" y1="355.00" x2="1415.50" y2="536" stroke="#eaeaea" stroke-width="1"/><line x1="1432.50" y1="355.00" x2="1432.50" y2="536" stroke="#eaeaea" stroke-width="1"/><line x1="1450.50" y1="355.00" x2="1450.50" y2="536" stroke="#eaeaea" stroke-width="1"/><line x1="1468.50" y1="355.00" x2="1468.50" y2="536" stroke="#eaeaea" stroke-width="1"/><line x1="1485.50" y1="355.00" x2="1485.50" y2="536" stroke="#eaeaea" stroke-width="1"/><line x1="1503.50" y1="355.00" x2="1503.50" y2="536" stroke="#eaeaea" stroke-width="1"/><line x1="1520.50" y1="355.00" x2="1520.50" y2="536" stroke="#eaeaea" stroke-width="1"/><line x1="1538.50" y1="355.00" x2="1538.50" y2="536" stroke="#eaeaea" stroke-width="1"/><line x1="1555.50" y1="355.00" x2="1555.50" y2="536" stroke="#eaeaea" stroke-width="1"/><line x1="1573.50" y1="355.00" x2="1573.50" y2="536" stroke="#eaeaea" stroke-width="1"/><line x1="1591.50" y1="355.00" x2="1591.50" y2="536" stroke="#eaeaea" stroke-width="1"/><line x1="1608.50" y1="355.00" x2="1608.50" y2="536" stroke="#eaeaea" stroke-width="1"/><line x1="1626.50" y1="355.00" x2="1626.50" y2="536" stroke="#eaeaea" stroke-width="1"/><line x1="1643.50" y1="355.00" x2="1643.50" y2="536" stroke="#eaeaea" stroke-width="1"/><line x1="1661.50" y1="355.00" x2="1661.50" y2="536" stroke="#eaeaea" stroke-width="1"/><line x1="1679.50" y1="355.00" x2="1679.50" y2="536" stroke="#eaeaea" stroke-width="1"/><line x1="1696.50" y1="355.00" x2="1696.50" y2="536" stroke="#eaeaea" stroke-width="1"/><line x1="1714.50" y1="355.00" x2="1714.50" y2="536" stroke="#eaeaea" stroke-width="1"/><line x1="1731.50" y1="355.00" x2="1731.50" y2="536" stroke="#eaeaea" stroke-width="1"/><line x1="1749.50" y1="355.00" x2="1749.50" y2="536" stroke="#eaeaea" stroke-width="1"/><line x1="1766.50" y1="355.00" x2="1766.50" y2="536" stroke="#eaeaea" stroke-width="1"/><line x1="1784.50" y1="355.00" x2="1784.50" y2="536" stroke="#eaeaea" stroke-width="1"/><line x1="1802.50" y1="355.00" x2="1802.50" y2="536" stroke="#eaeaea" stroke-width="1"/><line x1="1819.50" y1="355.00" x2="1819.50" y2="536" stroke="#eaeaea" stroke-width="1"/><line x1="1837.50" y1="355.00" x2="1837.50" y2="536" stroke="#eaeaea" stroke-width="1"/><line x1="1854.50" y1="355.00" x2="1854.50" y2="536" stroke="#eaeaea" stroke-width="1"/><rect x="995.90" y="521.70" width="12.60" height="7.80" fill="#d88183"/><rect x="995.90" y="513.40" width="12.60" height="8.30" fill="#ffa500"/><rect x="995.90" y="512.80" width="12.60" height="0.60" fill="#ffcd55"/><rect x="995.90" y="468.40" width="12.60" height="44.40" fill="#6d757d"/><rect x="995.90" y="465.80" width="12.60" height="2.60" fill="#c3d5a1"/><rect x="1013.48" y="524.30" width="12.60" height="5.20" fill="#d88183"/><rect x="1013.48" y="484.00" width="12.60" height="40.30" fill="#ffa500"/><rect x="1013.48" y="482.30" width="12.60" height="1.70" fill="#ffcd55"/><rect x="1013.48" y="481.00" width="12.60" height="1.30" fill="#6d757d"/><rect x="1013.48" y="476.20" width="12.60" height="4.80" fill="#c3d5a1"/><rect x="1031.06" y="509.90" width="12.60" height="19.60" fill="#d88183"/><rect x="1031.06" y="508.50" width="12.60" height="1.40" fill="#ffa500"/><rect x="1031.06" y="507.70" width="12.60" height="0.80" fill="#ffcd55"/><rect x="1031.06" y="504.60" width="12.60" height="3.10" fill="#c3d5a1"/><rect x="1048.64" y="517.30" width="12.60" height="12.20" fill="#d88183"/><rect x="1048.64" y="516.20" width="12.60" height="1.10" fill="#ffa500"/><rect x="1048.64" y="515.30" width="12.60" height="0.90" fill="#ffcd55"/><rect x="1048.64" y="508.60" width="12.60" height="6.70" fill="#c3d5a1"/><rect x="1066.22" y="523.20" width="12.60" height="6.30" fill="#d88183"/><rect x="1066.22" y="522.30" width="12.60" height="0.90" fill="#ffa500"/><rect x="1066.22" y="521.50" width="12.60" height="0.80" fill="#ffcd55"/><rect x="1066.22" y="516.20" width="12.60" height="5.30" fill="#c3d5a1"/><rect x="1083.80" y="522.80" width="12.60" height="6.70" fill="#d88183"/><rect x="1083.80" y="504.20" width="12.60" height="18.60" fill="#ffa500"/><rect x="1083.80" y="502.50" width="12.60" height="1.70" fill="#ffcd55"/><rect x="1083.80" y="498.10" width="12.60" height="4.40" fill="#c3d5a1"/><rect x="1101.38" y="521.20" width="12.60" height="8.30" fill="#d88183"/><rect x="1101.38" y="519.90" width="12.60" height="1.30" fill="#ffa500"/><rect x="1101.38" y="519.20" width="12.60" height="0.70" fill="#ffcd55"/><rect x="1101.38" y="518.40" width="12.60" height="0.80" fill="#c3d5a1"/><rect x="1118.96" y="522.30" width="12.60" height="7.20" fill="#d88183"/><rect x="1118.96" y="521.75" width="12.60" height="0.55" fill="#ffa500"/><rect x="1118.96" y="520.35" width="12.60" height="1.40" fill="#ffcd55"/><rect x="1118.96" y="518.25" width="12.60" height="2.10" fill="#c3d5a1"/><rect x="1136.54" y="519.30" width="12.60" height="10.20" fill="#d88183"/><rect x="1136.54" y="512.50" width="12.60" height="6.80" fill="#ffa500"/><rect x="1136.54" y="488.70" width="12.60" height="23.80" fill="#ffcd55"/><rect x="1136.54" y="480.40" width="12.60" height="8.30" fill="#c3d5a1"/><rect x="1154.12" y="528.40" width="12.60" height="1.10" fill="#d88183"/><rect x="1154.12" y="524.00" width="12.60" height="4.40" fill="#ffa500"/><rect x="1154.12" y="522.90" width="12.60" height="1.10" fill="#ffcd55"/><rect x="1171.70" y="526.40" width="12.60" height="3.10" fill="#d88183"/><rect x="1171.70" y="525.85" width="12.60" height="0.55" fill="#ffa500"/><rect x="1171.70" y="524.75" width="12.60" height="1.10" fill="#ffcd55"/><rect x="1189.28" y="520.10" width="12.60" height="9.40" fill="#d88183"/><rect x="1189.28" y="519.30" width="12.60" height="0.80" fill="#ffa500"/><rect x="1189.28" y="518.40" width="12.60" height="0.90" fill="#ffcd55"/><rect x="1206.86" y="523.20" width="12.60" height="6.30" fill="#d88183"/><rect x="1206.86" y="521.80" width="12.60" height="1.40" fill="#ffa500"/><rect x="1206.86" y="521.30" width="12.60" height="0.50" fill="#ffcd55"/><rect x="1224.44" y="519.00" width="12.60" height="10.50" fill="#d88183"/><rect x="1224.44" y="514.80" width="12.60" height="4.20" fill="#ffa500"/><rect x="1224.44" y="514.40" width="12.60" height="0.40" fill="#ffcd55"/><rect x="1242.02" y="516.50" width="12.60" height="13.00" fill="#d88183"/><rect x="1242.02" y="516.00" width="12.60" height="0.50" fill="#ffa500"/><rect x="1259.60" y="529.10" width="12.60" height="0.40" fill="#d88183"/><rect x="1259.60" y="528.20" width="12.60" height="0.90" fill="#ffa500"/><rect x="1277.18" y="529.10" width="12.60" height="0.40" fill="#d88183"/><rect x="1277.18" y="528.30" width="12.60" height="0.80" fill="#ffa500"/><rect x="1294.76" y="525.60" width="12.60" height="3.90" fill="#d88183"/><rect x="1294.76" y="521.40" width="12.60" height="4.20" fill="#ffa500"/><rect x="1294.76" y="521.00" width="12.60" height="0.40" fill="#ffcd55"/><rect x="1294.76" y="461.30" width="12.60" height="59.70" fill="#6d757d"/><rect x="1312.34" y="524.50" width="12.60" height="5.00" fill="#d88183"/><rect x="1312.34" y="523.70" width="12.60" height="0.80" fill="#ffa500"/><rect x="1312.34" y="523.40" width="12.60" height="0.30" fill="#ffcd55"/><rect x="1312.34" y="522.60" width="12.60" height="0.80" fill="#6d757d"/><rect x="1329.92" y="521.30" width="12.60" height="8.20" fill="#d88183"/><rect x="1329.92" y="520.50" width="12.60" height="0.80" fill="#ffa500"/><rect x="1329.92" y="519.60" width="12.60" height="0.90" fill="#ffcd55"/><rect x="1329.92" y="518.80" width="12.60" height="0.80" fill="#6d757d"/><rect x="1347.50" y="521.00" width="12.60" height="8.50" fill="#d88183"/><rect x="1347.50" y="501.50" width="12.60" height="19.50" fill="#ffa500"/><rect x="1347.50" y="501.20" width="12.60" height="0.30" fill="#ffcd55"/><rect x="1347.50" y="500.30" width="12.60" height="0.90" fill="#6d757d"/><rect x="1347.50" y="446.40" width="12.60" height="53.90" fill="#c3d5a1"/><rect x="1365.08" y="526.60" width="12.60" height="2.90" fill="#d88183"/><rect x="1365.08" y="521.90" width="12.60" height="4.70" fill="#ffa500"/><rect x="1365.08" y="521.40" width="12.60" height="0.50" fill="#ffcd55"/><rect x="1365.08" y="520.90" width="12.60" height="0.50" fill="#6d757d"/><rect x="1365.08" y="515.70" width="12.60" height="5.20" fill="#c3d5a1"/><rect x="1382.66" y="519.00" width="12.60" height="10.50" fill="#d88183"/><rect x="1382.66" y="499.80" width="12.60" height="19.20" fill="#ffa500"/><rect x="1382.66" y="499.50" width="12.60" height="0.30" fill="#ffcd55"/><rect x="1382.66" y="498.30" width="12.60" height="1.20" fill="#6d757d"/><rect x="1382.66" y="492.70" width="12.60" height="5.60" fill="#c3d5a1"/><rect x="1400.24" y="523.10" width="12.60" height="6.40" fill="#d88183"/><rect x="1400.24" y="493.00" width="12.60" height="30.10" fill="#ffa500"/><rect x="1400.24" y="492.20" width="12.60" height="0.80" fill="#ffcd55"/><rect x="1400.24" y="485.60" width="12.60" height="6.60" fill="#c3d5a1"/><rect x="1417.82" y="521.70" width="12.60" height="7.80" fill="#d88183"/><rect x="1417.82" y="499.20" width="12.60" height="22.50" fill="#ffa500"/><rect x="1417.82" y="498.90" width="12.60" height="0.30" fill="#ffcd55"/><rect x="1417.82" y="497.70" width="12.60" height="1.20" fill="#6d757d"/><rect x="1417.82" y="490.50" width="12.60" height="7.20" fill="#c3d5a1"/><rect x="1435.40" y="525.80" width="12.60" height="3.70" fill="#d88183"/><rect x="1435.40" y="521.70" width="12.60" height="4.10" fill="#ffa500"/><rect x="1435.40" y="521.40" width="12.60" height="0.30" fill="#ffcd55"/><rect x="1435.40" y="515.50" width="12.60" height="5.90" fill="#c3d5a1"/><rect x="1452.98" y="515.50" width="12.60" height="14.00" fill="#d88183"/><rect x="1452.98" y="514.60" width="12.60" height="0.90" fill="#ffa500"/><rect x="1452.98" y="514.30" width="12.60" height="0.30" fill="#ffcd55"/><rect x="1452.98" y="513.10" width="12.60" height="1.20" fill="#6d757d"/><rect x="1452.98" y="510.00" width="12.60" height="3.10" fill="#c3d5a1"/><rect x="1470.56" y="521.60" width="12.60" height="7.90" fill="#d88183"/><rect x="1470.56" y="520.60" width="12.60" height="1.00" fill="#ffa500"/><rect x="1470.56" y="520.30" width="12.60" height="0.30" fill="#ffcd55"/><rect x="1470.56" y="518.70" width="12.60" height="1.60" fill="#6d757d"/><rect x="1470.56" y="513.30" width="12.60" height="5.40" fill="#c3d5a1"/><rect x="1488.14" y="521.60" width="12.60" height="7.90" fill="#d88183"/><rect x="1488.14" y="520.80" width="12.60" height="0.80" fill="#ffa500"/><rect x="1488.14" y="520.50" width="12.60" height="0.30" fill="#ffcd55"/><rect x="1488.14" y="519.50" width="12.60" height="1.00" fill="#6d757d"/><rect x="1488.14" y="517.80" width="12.60" height="1.70" fill="#c3d5a1"/><rect x="1505.72" y="523.10" width="12.60" height="6.40" fill="#d88183"/><rect x="1505.72" y="518.70" width="12.60" height="4.40" fill="#ffa500"/><rect x="1505.72" y="518.40" width="12.60" height="0.30" fill="#ffcd55"/><rect x="1505.72" y="516.20" width="12.60" height="2.20" fill="#c3d5a1"/><rect x="1523.30" y="521.90" width="12.60" height="7.60" fill="#d88183"/><rect x="1523.30" y="520.70" width="12.60" height="1.20" fill="#ffa500"/><rect x="1523.30" y="520.40" width="12.60" height="0.30" fill="#ffcd55"/><rect x="1523.30" y="519.50" width="12.60" height="0.90" fill="#c3d5a1"/><rect x="1540.88" y="522.50" width="12.60" height="7.00" fill="#d88183"/><rect x="1540.88" y="521.70" width="12.60" height="0.80" fill="#ffa500"/><rect x="1540.88" y="517.60" width="12.60" height="4.10" fill="#c3d5a1"/><rect x="1558.46" y="519.40" width="12.60" height="10.10" fill="#d88183"/><rect x="1558.46" y="513.80" width="12.60" height="5.60" fill="#ffa500"/><rect x="1558.46" y="513.50" width="12.60" height="0.30" fill="#ffcd55"/><rect x="1558.46" y="509.40" width="12.60" height="4.10" fill="#c3d5a1"/><rect x="1576.04" y="525.40" width="12.60" height="4.10" fill="#d88183"/><rect x="1576.04" y="521.00" width="12.60" height="4.40" fill="#ffa500"/><rect x="1576.04" y="520.70" width="12.60" height="0.30" fill="#ffcd55"/><rect x="1593.62" y="522.50" width="12.60" height="7.00" fill="#d88183"/><rect x="1593.62" y="521.70" width="12.60" height="0.80" fill="#ffa500"/><rect x="1611.20" y="522.20" width="12.60" height="7.30" fill="#d88183"/><rect x="1611.20" y="521.40" width="12.60" height="0.80" fill="#ffa500"/><rect x="1628.78" y="521.00" width="12.60" height="8.50" fill="#d88183"/><rect x="1628.78" y="520.40" width="12.60" height="0.60" fill="#ffa500"/><rect x="1628.78" y="520.10" width="12.60" height="0.30" fill="#ffcd55"/><rect x="1646.36" y="523.70" width="12.60" height="5.80" fill="#d88183"/><rect x="1646.36" y="519.30" width="12.60" height="4.40" fill="#ffa500"/><rect x="1646.36" y="518.30" width="12.60" height="1.00" fill="#ffcd55"/><rect x="1663.94" y="516.70" width="12.60" height="12.80" fill="#d88183"/><rect x="1663.94" y="515.90" width="12.60" height="0.80" fill="#ffa500"/><rect x="1663.94" y="515.20" width="12.60" height="0.70" fill="#ffcd55"/><rect x="1681.52" y="524.80" width="12.60" height="4.70" fill="#d88183"/><rect x="1681.52" y="523.90" width="12.60" height="0.90" fill="#ffa500"/><rect x="1681.52" y="523.30" width="12.60" height="0.60" fill="#ffcd55"/><rect x="1699.10" y="522.50" width="12.60" height="7.00" fill="#d88183"/><rect x="1699.10" y="521.30" width="12.60" height="1.20" fill="#ffa500"/><rect x="1699.10" y="520.70" width="12.60" height="0.60" fill="#ffcd55"/><rect x="1716.68" y="525.40" width="12.60" height="4.10" fill="#d88183"/><rect x="1716.68" y="521.00" width="12.60" height="4.40" fill="#ffa500"/><rect x="1716.68" y="519.60" width="12.60" height="1.40" fill="#ffcd55"/><rect x="1716.68" y="456.60" width="12.60" height="63.00" fill="#6d757d"/><rect x="1734.26" y="521.90" width="12.60" height="7.60" fill="#d88183"/><rect x="1734.26" y="521.30" width="12.60" height="0.60" fill="#ffa500"/><rect x="1734.26" y="520.10" width="12.60" height="1.20" fill="#ffcd55"/><rect x="1734.26" y="519.30" width="12.60" height="0.80" fill="#6d757d"/><rect x="1734.26" y="518.60" width="12.60" height="0.70" fill="#c3d5a1"/><rect x="1751.84" y="522.50" width="12.60" height="7.00" fill="#d88183"/><rect x="1751.84" y="521.70" width="12.60" height="0.80" fill="#ffa500"/><rect x="1751.84" y="520.80" width="12.60" height="0.90" fill="#ffcd55"/><rect x="1751.84" y="519.90" width="12.60" height="0.90" fill="#6d757d"/><rect x="1769.42" y="522.20" width="12.60" height="7.30" fill="#d88183"/><rect x="1769.42" y="519.00" width="12.60" height="3.20" fill="#ffa500"/><rect x="1769.42" y="514.70" width="12.60" height="4.30" fill="#ffcd55"/><rect x="1769.42" y="513.50" width="12.60" height="1.20" fill="#6d757d"/><rect x="1787.00" y="520.20" width="12.60" height="9.30" fill="#d88183"/><rect x="1787.00" y="507.40" width="12.60" height="12.80" fill="#ffa500"/><rect x="1787.00" y="506.20" width="12.60" height="1.20" fill="#ffcd55"/><rect x="1787.00" y="505.60" width="12.60" height="0.60" fill="#6d757d"/><rect x="1787.00" y="505.00" width="12.60" height="0.60" fill="#c3d5a1"/><rect x="1804.58" y="516.70" width="12.60" height="12.80" fill="#d88183"/><rect x="1804.58" y="512.40" width="12.60" height="4.30" fill="#ffa500"/><rect x="1804.58" y="362.60" width="12.60" height="149.80" fill="#ffcd55"/><rect x="1822.16" y="521.90" width="12.60" height="7.60" fill="#d88183"/><rect x="1822.16" y="521.60" width="12.60" height="0.30" fill="#ffa500"/><rect x="1822.16" y="519.50" width="12.60" height="2.10" fill="#ffcd55"/><rect x="1839.74" y="528.60" width="12.60" height="0.90" fill="#d88183"/></svg>
<div class="t" style="left:979.26px;top:524.00px;font-size:9.70px;color:#707070;font-weight:normal;">0</div>
<div class="t" style="left:968.49px;top:489.00px;font-size:9.70px;color:#707070;font-weight:normal;">500</div>
<div class="t" style="left:960.39px;top:454.00px;font-size:9.70px;color:#707070;font-weight:normal;">1.000</div>
<div class="t" style="left:960.39px;top:419.00px;font-size:9.70px;color:#707070;font-weight:normal;">1.500</div>
<div class="t" style="left:960.39px;top:385.00px;font-size:9.70px;color:#707070;font-weight:normal;">2.000</div>
<div class="t" style="left:960.39px;top:350.00px;font-size:9.70px;color:#707070;font-weight:normal;">2.500</div>
<div class="t" style="left:989.88px;top:539.00px;font-size:9.70px;color:#707070;font-weight:normal;">12:00</div>
<div class="t" style="left:1042.62px;top:539.00px;font-size:9.70px;color:#707070;font-weight:normal;">15:00</div>
<div class="t" style="left:1095.36px;top:539.00px;font-size:9.70px;color:#707070;font-weight:normal;">18:00</div>
<div class="t" style="left:1148.22px;top:539.00px;font-size:9.70px;color:#707070;font-weight:normal;">21:00</div>
<div class="t" style="left:1201.01px;top:539.00px;font-size:9.70px;color:#707070;font-weight:normal;">00:00</div>
<div class="t" style="left:1253.75px;top:539.00px;font-size:9.70px;color:#707070;font-weight:normal;">03:00</div>
<div class="t" style="left:1306.49px;top:539.00px;font-size:9.70px;color:#707070;font-weight:normal;">06:00</div>
<div class="t" style="left:1359.23px;top:539.00px;font-size:9.70px;color:#707070;font-weight:normal;">09:00</div>
<div class="t" style="left:1411.80px;top:539.00px;font-size:9.70px;color:#707070;font-weight:normal;">12:00</div>
<div class="t" style="left:1464.54px;top:539.00px;font-size:9.70px;color:#707070;font-weight:normal;">15:00</div>
<div class="t" style="left:1517.28px;top:539.00px;font-size:9.70px;color:#707070;font-weight:normal;">18:00</div>
<div class="t" style="left:1570.14px;top:539.00px;font-size:9.70px;color:#707070;font-weight:normal;">21:00</div>
<div class="t" style="left:1622.93px;top:539.00px;font-size:9.70px;color:#707070;font-weight:normal;">00:00</div>
<div class="t" style="left:1675.67px;top:539.00px;font-size:9.70px;color:#707070;font-weight:normal;">03:00</div>
<div class="t" style="left:1728.41px;top:539.00px;font-size:9.70px;color:#707070;font-weight:normal;">06:00</div>
<div class="t" style="left:1781.15px;top:539.00px;font-size:9.70px;color:#707070;font-weight:normal;">09:00</div>
<div class="t" style="left:1833.72px;top:539.00px;font-size:9.70px;color:#707070;font-weight:normal;">12:00</div>
<div class="r" style="left:2px;top:573px;width:1867px;height:300px;background:#fff;border:1px solid #cdcdcd;box-sizing:border-box"></div>
<div class="r" style="left:15px;top:585px;width:1841px;height:23px;background:#fff;border:1px solid #a9a9a9;box-sizing:border-box"></div>
<div class="t" style="left:17.17px;top:591.00px;font-size:11.00px;color:#484848;font-weight:normal;transform:scaleX(0.9724);">Cerca nome agente</div>
<div class="t" style="left:119.60px;top:621.00px;font-size:11.40px;color:#5a6066;font-weight:bold;transform:scaleX(0.9190);">TIMESTAMP</div>
<div class="t" style="left:354.14px;top:621.00px;font-size:11.40px;color:#5a6066;font-weight:bold;transform:scaleX(0.8967);">DISPOSITIVO</div>
<div class="t" style="left:566.00px;top:621.00px;font-size:11.40px;color:#5a6066;font-weight:bold;transform:scaleX(0.8955);">TATTICA MITRE</div>
<div class="t" style="left:832.90px;top:621.00px;font-size:11.40px;color:#5a6066;font-weight:bold;transform:scaleX(0.8840);">TECNICA MITRE</div>
<div class="t" style="left:1237.94px;top:621.00px;font-size:11.40px;color:#5a6066;font-weight:bold;transform:scaleX(0.8863);">DESCRIZIONE</div>
<div class="t" style="left:1575.37px;top:621.00px;font-size:11.40px;color:#5a6066;font-weight:bold;transform:scaleX(0.8548);">LIVELLO</div>
<div class="t" style="left:1736.16px;top:621.00px;font-size:11.40px;color:#5a6066;font-weight:bold;transform:scaleX(0.8639);">DETTAGLIO</div>
<div class="r" style="left:15px;top:642px;width:1841px;height:1px;background:#555555;"></div>
<div class="t" style="left:96.00px;top:658.00px;font-size:11.80px;color:#3a3a3a;font-weight:normal;transform:scaleX(1.0092);">28/11/2025 11:56:23</div>
<div class="t" style="left:495.96px;top:651.00px;font-size:11.80px;color:#3a3a3a;font-weight:normal;transform:scaleX(0.9773);">Impact</div>
<div class="t" style="left:496.13px;top:666.00px;font-size:11.80px;color:#3a3a3a;font-weight:normal;transform:scaleX(0.9212);">Defense Evasion</div>
<div class="t" style="left:726.60px;top:651.00px;font-size:11.80px;color:#3a3a3a;font-weight:normal;transform:scaleX(0.9396);">Stored Data Manipulation</div>
<div class="t" style="left:726.20px;top:666.00px;font-size:11.80px;color:#3a3a3a;font-weight:normal;transform:scaleX(0.9520);">Modify Registry</div>
<div class="t" style="left:1032.64px;top:658.00px;font-size:11.80px;color:#3a3a3a;font-weight:normal;transform:scaleX(0.9135);">Registry Value Integrity Checksum Changed</div>
<div class="t" style="left:1592.81px;top:658.00px;font-size:11.80px;color:#3a3a3a;font-weight:normal;transform:scaleX(1.0348);">5</div>
<svg class="r" style="left:291px;top:658px;overflow:hidden" width="58" height="10" viewBox="0 0 58 10" preserveAspectRatio="none"><rect x="0.00" y="0.00" width="5.13" height="5.30" fill="#b4b8bc"/><rect x="4.83" y="0.00" width="5.13" height="5.30" fill="#dcdcdc"/><rect x="9.67" y="0.00" width="5.13" height="5.30" fill="#b4b8bc"/><rect x="14.50" y="0.00" width="5.13" height="5.30" fill="#d0d0d0"/><rect x="19.33" y="0.00" width="5.13" height="5.30" fill="#c0c0bc"/><rect x="24.17" y="0.00" width="5.13" height="5.30" fill="#c0c0bc"/><rect x="29.00" y="0.00" width="5.13" height="5.30" fill="#ccd4e0"/><rect x="33.83" y="0.00" width="5.13" height="5.30" fill="#ccd4e0"/><rect x="38.67" y="0.00" width="5.13" height="5.30" fill="#dcdcdc"/><rect x="43.50" y="0.00" width="5.13" height="5.30" fill="#b4b8bc"/><rect x="48.33" y="0.00" width="5.13" height="5.30" fill="#b4b8bc"/><rect x="53.17" y="0.00" width="5.13" height="5.30" fill="#c0c0bc"/><rect x="0.00" y="5.00" width="5.13" height="5.30" fill="#d0d0d0"/><rect x="4.83" y="5.00" width="5.13" height="5.30" fill="#c4ccd8"/><rect x="9.67" y="5.00" width="5.13" height="5.30" fill="#c0c4c8"/><rect x="14.50" y="5.00" width="5.13" height="5.30" fill="#c8d4dc"/><rect x="19.33" y="5.00" width="5.13" height="5.30" fill="#d0d0d0"/><rect x="24.17" y="5.00" width="5.13" height="5.30" fill="#c8d4dc"/><rect x="29.00" y="5.00" width="5.13" height="5.30" fill="#c4ccd8"/><rect x="33.83" y="5.00" width="5.13" height="5.30" fill="#c0c0c0"/><rect x="38.67" y="5.00" width="5.13" height="5.30" fill="#d0d0d0"/><rect x="43.50" y="5.00" width="5.13" height="5.30" fill="#c4ccd8"/><rect x="48.33" y="5.00" width="5.13" height="5.30" fill="#d0d0d0"/><rect x="53.17" y="5.00" width="5.13" height="5.30" fill="#cccccc"/></svg>
<div class="r" style="left:15px;top:684px;width:1841px;height:44px;background:#f2f2f2;"></div>
<div class="r" style="left:15px;top:684px;width:1841px;height:1px;background:#ececec;"></div>
<div class="r" style="left:15px;top:727px;width:1841px;height:1px;background:#ececec;"></div>
<div class="t" style="left:96.00px;top:701.00px;font-size:11.80px;color:#3a3a3a;font-weight:normal;transform:scaleX(1.0092);">28/11/2025 11:56:23</div>
<div class="t" style="left:495.96px;top:694.00px;font-size:11.80px;color:#3a3a3a;font-weight:normal;transform:scaleX(0.9773);">Impact</div>
<div class="t" style="left:496.13px;top:709.00px;font-size:11.80px;color:#3a3a3a;font-weight:normal;transform:scaleX(0.9212);">Defense Evasion</div>
<div class="t" style="left:726.60px;top:694.00px;font-size:11.80px;color:#3a3a3a;font-weight:normal;transform:scaleX(0.9396);">Stored Data Manipulation</div>
<div class="t" style="left:726.20px;top:709.00px;font-size:11.80px;color:#3a3a3a;font-weight:normal;transform:scaleX(0.9520);">Modify Registry</div>
<div class="t" style="left:1032.64px;top:701.00px;font-size:11.80px;color:#3a3a3a;font-weight:normal;transform:scaleX(0.9135);">Registry Value Integrity Checksum Changed</div>
<div class="t" style="left:1592.81px;top:701.00px;font-size:11.80px;color:#3a3a3a;font-weight:normal;transform:scaleX(1.0348);">5</div>
<svg class="r" style="left:291px;top:700.6px;overflow:hidden" width="58" height="10" viewBox="0 0 58 10" preserveAspectRatio="none"><rect x="0.00" y="0.00" width="5.13" height="5.30" fill="#c0c0bc"/><rect x="4.83" y="0.00" width="5.13" height="5.30" fill="#d0d0d0"/><rect x="9.67" y="0.00" width="5.13" height="5.30" fill="#ccd4e0"/><rect x="14.50" y="0.00" width="5.13" height="5.30" fill="#b4b8bc"/><rect x="19.33" y="0.00" width="5.13" height="5.30" fill="#ccd4e0"/><rect x="24.17" y="0.00" width="5.13" height="5.30" fill="#c0c0bc"/><rect x="29.00" y="0.00" width="5.13" height="5.30" fill="#ccc8c4"/><rect x="33.83" y="0.00" width="5.13" height="5.30" fill="#b8b4ac"/><rect x="38.67" y="0.00" width="5.13" height="5.30" fill="#b4b8bc"/><rect x="43.50" y="0.00" width="5.13" height="5.30" fill="#c0c0bc"/><rect x="48.33" y="0.00" width="5.13" height="5.30" fill="#b8b4ac"/><rect x="53.17" y="0.00" width="5.13" height="5.30" fill="#d0d0d0"/><rect x="0.00" y="5.00" width="5.13" height="5.30" fill="#cccccc"/><rect x="4.83" y="5.00" width="5.13" height="5.30" fill="#c0c0c0"/><rect x="9.67" y="5.00" width="5.13" height="5.30" fill="#cccccc"/><rect x="14.50" y="5.00" width="5.13" height="5.30" fill="#b8bcc8"/><rect x="19.33" y="5.00" width="5.13" height="5.30" fill="#c8d4dc"/><rect x="24.17" y="5.00" width="5.13" height="5.30" fill="#e0dcd0"/><rect x="29.00" y="5.00" width="5.13" height="5.30" fill="#cccccc"/><rect x="33.83" y="5.00" width="5.13" height="5.30" fill="#c0c0c0"/><rect x="38.67" y="5.00" width="5.13" height="5.30" fill="#c8d4dc"/><rect x="43.50" y="5.00" width="5.13" height="5.30" fill="#cccccc"/><rect x="48.33" y="5.00" width="5.13" height="5.30" fill="#c0c4c8"/><rect x="53.17" y="5.00" width="5.13" height="5.30" fill="#c0c0c0"/></svg>
<div class="t" style="left:96.00px;top:743.00px;font-size:11.80px;color:#3a3a3a;font-weight:normal;transform:scaleX(1.0092);">28/11/2025 11:56:23</div>
<div class="t" style="left:495.96px;top:736.00px;font-size:11.80px;color:#3a3a3a;font-weight:normal;transform:scaleX(0.9773);">Impact</div>
<div class="t" style="left:496.13px;top:751.00px;font-size:11.80px;color:#3a3a3a;font-weight:normal;transform:scaleX(0.9212);">Defense Evasion</div>
<div class="t" style="left:726.60px;top:736.00px;font-size:11.80px;color:#3a3a3a;font-weight:normal;transform:scaleX(0.9396);">Stored Data Manipulation</div>
<div class="t" style="left:726.20px;top:751.00px;font-size:11.80px;color:#3a3a3a;font-weight:normal;transform:scaleX(0.9520);">Modify Registry</div>
<div class="t" style="left:1032.64px;top:743.00px;font-size:11.80px;color:#3a3a3a;font-weight:normal;transform:scaleX(0.9135);">Registry Value Integrity Checksum Changed</div>
<div class="t" style="left:1592.81px;top:743.00px;font-size:11.80px;color:#3a3a3a;font-weight:normal;transform:scaleX(1.0348);">5</div>
<svg class="r" style="left:291px;top:743.2px;overflow:hidden" width="58" height="10" viewBox="0 0 58 10" preserveAspectRatio="none"><rect x="0.00" y="0.00" width="5.13" height="5.30" fill="#c0c0bc"/><rect x="4.83" y="0.00" width="5.13" height="5.30" fill="#d0d0d0"/><rect x="9.67" y="0.00" width="5.13" height="5.30" fill="#ccd4e0"/><rect x="14.50" y="0.00" width="5.13" height="5.30" fill="#ccd4e0"/><rect x="19.33" y="0.00" width="5.13" height="5.30" fill="#b4b8bc"/><rect x="24.17" y="0.00" width="5.13" height="5.30" fill="#dcdcdc"/><rect x="29.00" y="0.00" width="5.13" height="5.30" fill="#c0c0bc"/><rect x="33.83" y="0.00" width="5.13" height="5.30" fill="#ccd4e0"/><rect x="38.67" y="0.00" width="5.13" height="5.30" fill="#ccd4e0"/><rect x="43.50" y="0.00" width="5.13" height="5.30" fill="#b8b4ac"/><rect x="48.33" y="0.00" width="5.13" height="5.30" fill="#d4dce4"/><rect x="53.17" y="0.00" width="5.13" height="5.30" fill="#c0c0bc"/><rect x="0.00" y="5.00" width="5.13" height="5.30" fill="#e0dcd0"/><rect x="4.83" y="5.00" width="5.13" height="5.30" fill="#c0c4c8"/><rect x="9.67" y="5.00" width="5.13" height="5.30" fill="#c0c4c8"/><rect x="14.50" y="5.00" width="5.13" height="5.30" fill="#c0c0c0"/><rect x="19.33" y="5.00" width="5.13" height="5.30" fill="#e0dcd0"/><rect x="24.17" y="5.00" width="5.13" height="5.30" fill="#cccccc"/><rect x="29.00" y="5.00" width="5.13" height="5.30" fill="#c0c4c8"/><rect x="33.83" y="5.00" width="5.13" height="5.30" fill="#e0dcd0"/><rect x="38.67" y="5.00" width="5.13" height="5.30" fill="#c8d4dc"/><rect x="43.50" y="5.00" width="5.13" height="5.30" fill="#c0c4c8"/><rect x="48.33" y="5.00" width="5.13" height="5.30" fill="#c0c0c0"/><rect x="53.17" y="5.00" width="5.13" height="5.30" fill="#e0dcd0"/></svg>
<div class="r" style="left:15px;top:770px;width:1841px;height:43px;background:#f2f2f2;"></div>
<div class="r" style="left:15px;top:770px;width:1841px;height:1px;background:#ececec;"></div>
<div class="r" style="left:15px;top:812px;width:1841px;height:1px;background:#ececec;"></div>
<div class="t" style="left:96.00px;top:786.00px;font-size:11.80px;color:#3a3a3a;font-weight:normal;transform:scaleX(1.0092);">28/11/2025 11:56:23</div>
<div class="t" style="left:495.96px;top:779.00px;font-size:11.80px;color:#3a3a3a;font-weight:normal;transform:scaleX(0.9773);">Impact</div>
<div class="t" style="left:496.13px;top:794.00px;font-size:11.80px;color:#3a3a3a;font-weight:normal;transform:scaleX(0.9212);">Defense Evasion</div>
<div class="t" style="left:726.60px;top:779.00px;font-size:11.80px;color:#3a3a3a;font-weight:normal;transform:scaleX(0.9396);">Stored Data Manipulation</div>
<div class="t" style="left:726.20px;top:794.00px;font-size:11.80px;color:#3a3a3a;font-weight:normal;transform:scaleX(0.9520);">Modify Registry</div>
<div class="t" style="left:1032.64px;top:786.00px;font-size:11.80px;color:#3a3a3a;font-weight:normal;transform:scaleX(0.9135);">Registry Value Integrity Checksum Changed</div>
<div class="t" style="left:1592.81px;top:786.00px;font-size:11.80px;color:#3a3a3a;font-weight:normal;transform:scaleX(1.0348);">5</div>
<svg class="r" style="left:291px;top:785.8px;overflow:hidden" width="58" height="10" viewBox="0 0 58 10" preserveAspectRatio="none"><rect x="0.00" y="0.00" width="5.13" height="5.30" fill="#d4d4dc"/><rect x="4.83" y="0.00" width="5.13" height="5.30" fill="#ccc8c4"/><rect x="9.67" y="0.00" width="5.13" height="5.30" fill="#d4dce4"/><rect x="14.50" y="0.00" width="5.13" height="5.30" fill="#b8b4ac"/><rect x="19.33" y="0.00" width="5.13" height="5.30" fill="#b4b8bc"/><rect x="24.17" y="0.00" width="5.13" height="5.30" fill="#c0c0bc"/><rect x="29.00" y="0.00" width="5.13" height="5.30" fill="#b8b4ac"/><rect x="33.83" y="0.00" width="5.13" height="5.30" fill="#dcdcdc"/><rect x="38.67" y="0.00" width="5.13" height="5.30" fill="#dcdcdc"/><rect x="43.50" y="0.00" width="5.13" height="5.30" fill="#ccd4e0"/><rect x="48.33" y="0.00" width="5.13" height="5.30" fill="#ccc8c4"/><rect x="53.17" y="0.00" width="5.13" height="5.30" fill="#ccd4e0"/><rect x="0.00" y="5.00" width="5.13" height="5.30" fill="#c0c4c8"/><rect x="4.83" y="5.00" width="5.13" height="5.30" fill="#cccccc"/><rect x="9.67" y="5.00" width="5.13" height="5.30" fill="#c0c0c0"/><rect x="14.50" y="5.00" width="5.13" height="5.30" fill="#c0c4c8"/><rect x="19.33" y="5.00" width="5.13" height="5.30" fill="#c0c4c8"/><rect x="24.17" y="5.00" width="5.13" height="5.30" fill="#c0c4c8"/><rect x="29.00" y="5.00" width="5.13" height="5.30" fill="#e0dcd0"/><rect x="33.83" y="5.00" width="5.13" height="5.30" fill="#c0c4c8"/><rect x="38.67" y="5.00" width="5.13" height="5.30" fill="#d0d0d0"/><rect x="43.50" y="5.00" width="5.13" height="5.30" fill="#c4ccd8"/><rect x="48.33" y="5.00" width="5.13" height="5.30" fill="#e0dcd0"/><rect x="53.17" y="5.00" width="5.13" height="5.30" fill="#c8d4dc"/></svg>
<div class="t" style="left:96.00px;top:828.00px;font-size:11.80px;color:#3a3a3a;font-weight:normal;transform:scaleX(1.0092);">28/11/2025 11:56:23</div>
<div class="t" style="left:495.96px;top:822.00px;font-size:11.80px;color:#3a3a3a;font-weight:normal;transform:scaleX(0.9773);">Impact</div>
<div class="t" style="left:496.13px;top:836.00px;font-size:11.80px;color:#3a3a3a;font-weight:normal;transform:scaleX(0.9212);">Defense Evasion</div>
<div class="t" style="left:726.60px;top:822.00px;font-size:11.80px;color:#3a3a3a;font-weight:normal;transform:scaleX(0.9396);">Stored Data Manipulation</div>
<div class="t" style="left:726.20px;top:836.00px;font-size:11.80px;color:#3a3a3a;font-weight:normal;transform:scaleX(0.9520);">Modify Registry</div>
<div class="t" style="left:1032.64px;top:828.00px;font-size:11.80px;color:#3a3a3a;font-weight:normal;transform:scaleX(0.9135);">Registry Value Integrity Checksum Changed</div>
<div class="t" style="left:1592.81px;top:828.00px;font-size:11.80px;color:#3a3a3a;font-weight:normal;transform:scaleX(1.0348);">5</div>
<svg class="r" style="left:291px;top:828.4px;overflow:hidden" width="58" height="10" viewBox="0 0 58 10" preserveAspectRatio="none"><rect x="0.00" y="0.00" width="5.13" height="5.30" fill="#d0d0d0"/><rect x="4.83" y="0.00" width="5.13" height="5.30" fill="#ccd4e0"/><rect x="9.67" y="0.00" width="5.13" height="5.30" fill="#d4dce4"/><rect x="14.50" y="0.00" width="5.13" height="5.30" fill="#dcdcdc"/><rect x="19.33" y="0.00" width="5.13" height="5.30" fill="#d0d0d0"/><rect x="24.17" y="0.00" width="5.13" height="5.30" fill="#d0d0d0"/><rect x="29.00" y="0.00" width="5.13" height="5.30" fill="#ccc8c4"/><rect x="33.83" y="0.00" width="5.13" height="5.30" fill="#b8b4ac"/><rect x="38.67" y="0.00" width="5.13" height="5.30" fill="#ccd4e0"/><rect x="43.50" y="0.00" width="5.13" height="5.30" fill="#d0d0d0"/><rect x="48.33" y="0.00" width="5.13" height="5.30" fill="#d4dce4"/><rect x="53.17" y="0.00" width="5.13" height="5.30" fill="#c0c0bc"/><rect x="0.00" y="5.00" width="5.13" height="5.30" fill="#cccccc"/><rect x="4.83" y="5.00" width="5.13" height="5.30" fill="#b8bcc8"/><rect x="9.67" y="5.00" width="5.13" height="5.30" fill="#c8d4dc"/><rect x="14.50" y="5.00" width="5.13" height="5.30" fill="#c0c4c8"/><rect x="19.33" y="5.00" width="5.13" height="5.30" fill="#c0c4c8"/><rect x="24.17" y="5.00" width="5.13" height="5.30" fill="#d0d0d0"/><rect x="29.00" y="5.00" width="5.13" height="5.30" fill="#c0c4c8"/><rect x="33.83" y="5.00" width="5.13" height="5.30" fill="#b8bcc8"/><rect x="38.67" y="5.00" width="5.13" height="5.30" fill="#c0c4c8"/><rect x="43.50" y="5.00" width="5.13" height="5.30" fill="#c0c0c0"/><rect x="48.33" y="5.00" width="5.13" height="5.30" fill="#c4ccd8"/><rect x="53.17" y="5.00" width="5.13" height="5.30" fill="#c0c0c0"/></svg>
<div class="r" style="left:15px;top:855px;width:1841px;height:1px;background:#e3e3e3;"></div>
<svg class="r" style="left:0;top:0" width="1873" height="857"><path d="M271 625.5 L275.1 621 L279.2 625.5 Z M271 626.5 L275.1 631 L279.2 626.5 Z" fill="#d0d0d0"/><path d="M475 625.5 L479.1 621 L483.2 625.5 Z M475 626.5 L479.1 631 L483.2 626.5 Z" fill="#d0d0d0"/><path d="M705.5 625.5 L709.6 621 L713.7 625.5 Z M705.5 626.5 L709.6 631 L713.7 626.5 Z" fill="#d0d0d0"/><path d="M1011 625.5 L1015.1 621 L1019.2 625.5 Z M1011 626.5 L1015.1 631 L1019.2 626.5 Z" fill="#d0d0d0"/><path d="M1505.5 625.5 L1509.6 621 L1513.7 625.5 Z M1505.5 626.5 L1509.6 631 L1513.7 626.5 Z" fill="#d0d0d0"/><path d="M1658 625.5 L1662.1 621 L1666.2 625.5 Z M1658 626.5 L1662.1 631 L1666.2 626.5 Z" fill="#d0d0d0"/><path d="M1762.2 660.0 L1766.5 664.0 L1762.2 668.0 Z" fill="#555"/><path d="M1762.2 702.6 L1766.5 706.6 L1762.2 710.6 Z" fill="#555"/><path d="M1762.2 745.2 L1766.5 749.2 L1762.2 753.2 Z" fill="#555"/><path d="M1762.2 787.8 L1766.5 791.8 L1762.2 795.8 Z" fill="#555"/><path d="M1762.2 830.4 L1766.5 834.4 L1762.2 838.4 Z" fill="#555"/></svg>
</body></html>
